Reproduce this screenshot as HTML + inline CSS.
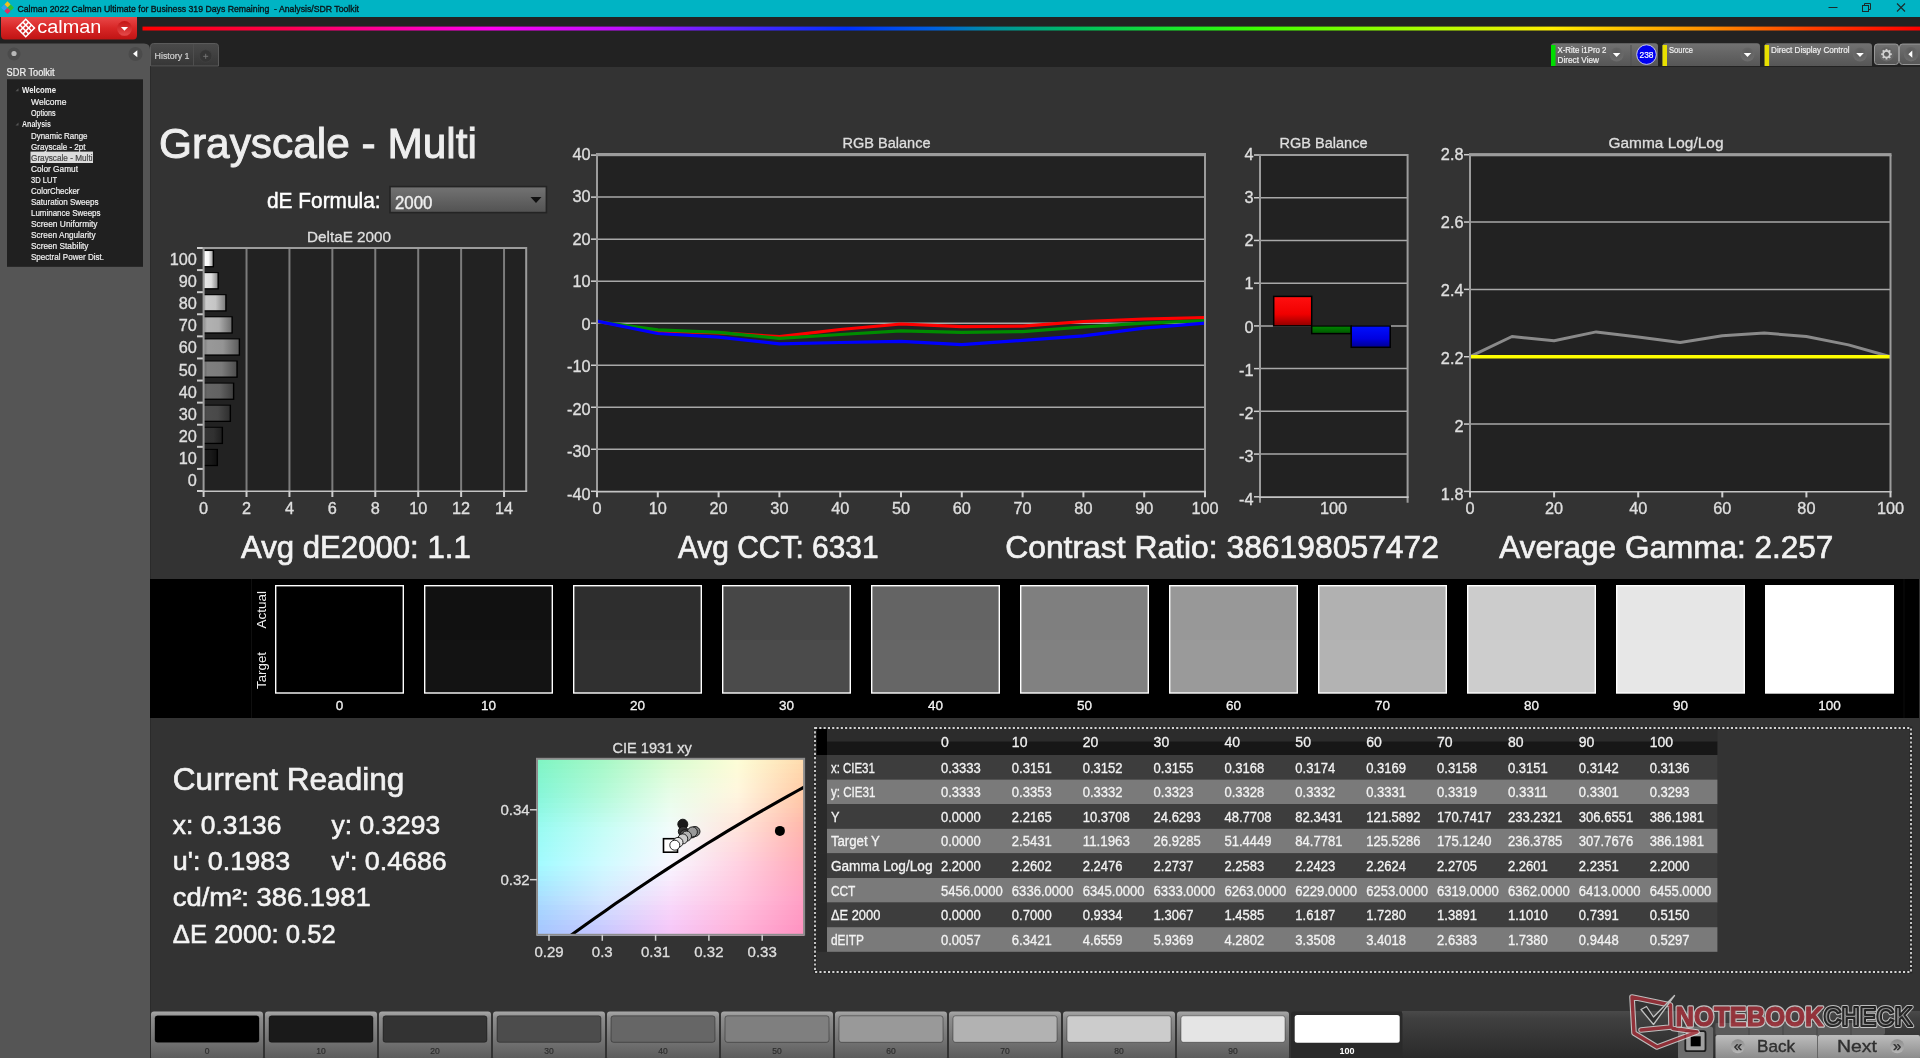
<!DOCTYPE html><html><head><meta charset="utf-8"><title>Calman Grayscale - Multi</title><style>html,body{margin:0;padding:0;background:#333;overflow:hidden;width:1920px;height:1058px;}svg{display:block;will-change:transform;font-family:"Liberation Sans",sans-serif;}</style></head><body><svg width="1920" height="1058" viewBox="0 0 1920 1058" font-family='"Liberation Sans", sans-serif'><defs><linearGradient id="gRed" x1="0" y1="0" x2="0" y2="1"><stop offset="0" stop-color="#e84848"/><stop offset="0.5" stop-color="#d82626"/><stop offset="1" stop-color="#c01414"/></linearGradient><linearGradient id="gDrp" x1="0" y1="0" x2="0" y2="1"><stop offset="0" stop-color="#c41414"/><stop offset="1" stop-color="#e44a4a"/></linearGradient><linearGradient id="gRain" x1="0" y1="0" x2="1" y2="0"><stop offset="0" stop-color="#ff0000"/><stop offset="0.081" stop-color="#ff0050"/><stop offset="0.138" stop-color="#ff00a0"/><stop offset="0.196" stop-color="#ff00f0"/><stop offset="0.269" stop-color="#c010ff"/><stop offset="0.314" stop-color="#7020ff"/><stop offset="0.396" stop-color="#0030ff"/><stop offset="0.445" stop-color="#0060e0"/><stop offset="0.478" stop-color="#0090a0"/><stop offset="0.527" stop-color="#00c060"/><stop offset="0.593" stop-color="#20f020"/><stop offset="0.629" stop-color="#40ff00"/><stop offset="0.726" stop-color="#b0ff00"/><stop offset="0.793" stop-color="#ffee00"/><stop offset="0.88" stop-color="#ff9000"/><stop offset="0.938" stop-color="#ff4000"/><stop offset="1" stop-color="#ff0000"/></linearGradient><linearGradient id="gTab" x1="0" y1="0" x2="0" y2="1"><stop offset="0" stop-color="#4a4a4a"/><stop offset="1" stop-color="#363636"/></linearGradient><linearGradient id="gTool" x1="0" y1="0" x2="0" y2="1"><stop offset="0" stop-color="#727272"/><stop offset="0.5" stop-color="#636363"/><stop offset="1" stop-color="#565656"/></linearGradient><radialGradient id="gDrop" cx="0.5" cy="0.35" r="0.6"><stop offset="0" stop-color="#5a5a5a"/><stop offset="1" stop-color="#6c6c6c"/></radialGradient><linearGradient id="gDD" x1="0" y1="0" x2="0" y2="1"><stop offset="0" stop-color="#737373"/><stop offset="1" stop-color="#525252"/></linearGradient><linearGradient id="gBar100" x1="0" y1="0" x2="1" y2="0"><stop offset="0" stop-color="rgb(204,204,204)"/><stop offset="0.12" stop-color="rgb(255,255,255)"/><stop offset="0.55" stop-color="rgb(247,247,247)"/><stop offset="1" stop-color="rgb(158,158,158)"/></linearGradient><linearGradient id="gBar90" x1="0" y1="0" x2="1" y2="0"><stop offset="0" stop-color="rgb(183,183,183)"/><stop offset="0.12" stop-color="rgb(229,229,229)"/><stop offset="0.55" stop-color="rgb(222,222,222)"/><stop offset="1" stop-color="rgb(141,141,141)"/></linearGradient><linearGradient id="gBar80" x1="0" y1="0" x2="1" y2="0"><stop offset="0" stop-color="rgb(163,163,163)"/><stop offset="0.12" stop-color="rgb(204,204,204)"/><stop offset="0.55" stop-color="rgb(197,197,197)"/><stop offset="1" stop-color="rgb(126,126,126)"/></linearGradient><linearGradient id="gBar70" x1="0" y1="0" x2="1" y2="0"><stop offset="0" stop-color="rgb(142,142,142)"/><stop offset="0.12" stop-color="rgb(178,178,178)"/><stop offset="0.55" stop-color="rgb(172,172,172)"/><stop offset="1" stop-color="rgb(110,110,110)"/></linearGradient><linearGradient id="gBar60" x1="0" y1="0" x2="1" y2="0"><stop offset="0" stop-color="rgb(122,122,122)"/><stop offset="0.12" stop-color="rgb(153,153,153)"/><stop offset="0.55" stop-color="rgb(148,148,148)"/><stop offset="1" stop-color="rgb(94,94,94)"/></linearGradient><linearGradient id="gBar50" x1="0" y1="0" x2="1" y2="0"><stop offset="0" stop-color="rgb(101,101,101)"/><stop offset="0.12" stop-color="rgb(127,127,127)"/><stop offset="0.55" stop-color="rgb(123,123,123)"/><stop offset="1" stop-color="rgb(78,78,78)"/></linearGradient><linearGradient id="gBar40" x1="0" y1="0" x2="1" y2="0"><stop offset="0" stop-color="rgb(81,81,81)"/><stop offset="0.12" stop-color="rgb(102,102,102)"/><stop offset="0.55" stop-color="rgb(98,98,98)"/><stop offset="1" stop-color="rgb(63,63,63)"/></linearGradient><linearGradient id="gBar30" x1="0" y1="0" x2="1" y2="0"><stop offset="0" stop-color="rgb(60,60,60)"/><stop offset="0.12" stop-color="rgb(76,76,76)"/><stop offset="0.55" stop-color="rgb(73,73,73)"/><stop offset="1" stop-color="rgb(47,47,47)"/></linearGradient><linearGradient id="gBar20" x1="0" y1="0" x2="1" y2="0"><stop offset="0" stop-color="rgb(40,40,40)"/><stop offset="0.12" stop-color="rgb(51,51,51)"/><stop offset="0.55" stop-color="rgb(49,49,49)"/><stop offset="1" stop-color="rgb(31,31,31)"/></linearGradient><linearGradient id="gBar10" x1="0" y1="0" x2="1" y2="0"><stop offset="0" stop-color="rgb(20,20,20)"/><stop offset="0.12" stop-color="rgb(26,26,26)"/><stop offset="0.55" stop-color="rgb(25,25,25)"/><stop offset="1" stop-color="rgb(16,16,16)"/></linearGradient><linearGradient id="gR" x1="0" y1="0" x2="0" y2="1"><stop offset="0" stop-color="#ff1010"/><stop offset="0.6" stop-color="#f00000"/><stop offset="1" stop-color="#900000"/></linearGradient><linearGradient id="gG" x1="0" y1="0" x2="0" y2="1"><stop offset="0" stop-color="#008800"/><stop offset="1" stop-color="#005500"/></linearGradient><linearGradient id="gB" x1="0" y1="0" x2="0" y2="1"><stop offset="0" stop-color="#0010ff"/><stop offset="0.6" stop-color="#0000e0"/><stop offset="1" stop-color="#000090"/></linearGradient><linearGradient id="gC0" x1="0" y1="0" x2="1" y2="0"><stop offset="0.0" stop-color="rgb(127,245,196)"/><stop offset="0.25" stop-color="rgb(167,248,199)"/><stop offset="0.5" stop-color="rgb(217,252,209)"/><stop offset="0.75" stop-color="rgb(253,253,215)"/><stop offset="1.0" stop-color="rgb(255,219,173)"/></linearGradient><linearGradient id="gC1" x1="0" y1="0" x2="1" y2="0"><stop offset="0.0" stop-color="rgb(128,245,199)"/><stop offset="0.25" stop-color="rgb(169,248,202)"/><stop offset="0.5" stop-color="rgb(219,252,212)"/><stop offset="0.75" stop-color="rgb(253,252,216)"/><stop offset="1.0" stop-color="rgb(255,216,172)"/></linearGradient><linearGradient id="gC2" x1="0" y1="0" x2="1" y2="0"><stop offset="0.0" stop-color="rgb(129,245,202)"/><stop offset="0.25" stop-color="rgb(171,249,205)"/><stop offset="0.5" stop-color="rgb(222,252,216)"/><stop offset="0.75" stop-color="rgb(254,251,217)"/><stop offset="1.0" stop-color="rgb(255,214,171)"/></linearGradient><linearGradient id="gC3" x1="0" y1="0" x2="1" y2="0"><stop offset="0.0" stop-color="rgb(130,245,205)"/><stop offset="0.25" stop-color="rgb(173,249,207)"/><stop offset="0.5" stop-color="rgb(224,252,219)"/><stop offset="0.75" stop-color="rgb(254,250,218)"/><stop offset="1.0" stop-color="rgb(255,211,170)"/></linearGradient><linearGradient id="gC4" x1="0" y1="0" x2="1" y2="0"><stop offset="0.0" stop-color="rgb(131,246,208)"/><stop offset="0.25" stop-color="rgb(175,249,210)"/><stop offset="0.5" stop-color="rgb(226,253,223)"/><stop offset="0.75" stop-color="rgb(254,249,220)"/><stop offset="1.0" stop-color="rgb(255,209,169)"/></linearGradient><linearGradient id="gC5" x1="0" y1="0" x2="1" y2="0"><stop offset="0.0" stop-color="rgb(132,246,211)"/><stop offset="0.25" stop-color="rgb(177,250,213)"/><stop offset="0.5" stop-color="rgb(228,253,226)"/><stop offset="0.75" stop-color="rgb(255,248,221)"/><stop offset="1.0" stop-color="rgb(255,206,168)"/></linearGradient><linearGradient id="gC6" x1="0" y1="0" x2="1" y2="0"><stop offset="0.0" stop-color="rgb(133,246,214)"/><stop offset="0.25" stop-color="rgb(179,250,215)"/><stop offset="0.5" stop-color="rgb(230,253,230)"/><stop offset="0.75" stop-color="rgb(255,247,222)"/><stop offset="1.0" stop-color="rgb(255,204,167)"/></linearGradient><linearGradient id="gC7" x1="0" y1="0" x2="1" y2="0"><stop offset="0.0" stop-color="rgb(135,246,217)"/><stop offset="0.25" stop-color="rgb(181,250,218)"/><stop offset="0.5" stop-color="rgb(232,253,233)"/><stop offset="0.75" stop-color="rgb(255,245,223)"/><stop offset="1.0" stop-color="rgb(255,201,166)"/></linearGradient><linearGradient id="gC8" x1="0" y1="0" x2="1" y2="0"><stop offset="0.0" stop-color="rgb(137,247,221)"/><stop offset="0.25" stop-color="rgb(183,251,222)"/><stop offset="0.5" stop-color="rgb(234,253,235)"/><stop offset="0.75" stop-color="rgb(255,243,222)"/><stop offset="1.0" stop-color="rgb(255,198,167)"/></linearGradient><linearGradient id="gC9" x1="0" y1="0" x2="1" y2="0"><stop offset="0.0" stop-color="rgb(140,248,224)"/><stop offset="0.25" stop-color="rgb(186,251,226)"/><stop offset="0.5" stop-color="rgb(235,253,238)"/><stop offset="0.75" stop-color="rgb(255,240,222)"/><stop offset="1.0" stop-color="rgb(255,196,168)"/></linearGradient><linearGradient id="gC10" x1="0" y1="0" x2="1" y2="0"><stop offset="0.0" stop-color="rgb(142,248,228)"/><stop offset="0.25" stop-color="rgb(188,251,230)"/><stop offset="0.5" stop-color="rgb(237,253,241)"/><stop offset="0.75" stop-color="rgb(255,238,222)"/><stop offset="1.0" stop-color="rgb(255,193,169)"/></linearGradient><linearGradient id="gC11" x1="0" y1="0" x2="1" y2="0"><stop offset="0.0" stop-color="rgb(145,249,232)"/><stop offset="0.25" stop-color="rgb(191,252,234)"/><stop offset="0.5" stop-color="rgb(238,252,243)"/><stop offset="0.75" stop-color="rgb(255,235,221)"/><stop offset="1.0" stop-color="rgb(255,190,170)"/></linearGradient><linearGradient id="gC12" x1="0" y1="0" x2="1" y2="0"><stop offset="0.0" stop-color="rgb(147,250,235)"/><stop offset="0.25" stop-color="rgb(193,252,238)"/><stop offset="0.5" stop-color="rgb(239,252,246)"/><stop offset="0.75" stop-color="rgb(255,233,221)"/><stop offset="1.0" stop-color="rgb(255,187,170)"/></linearGradient><linearGradient id="gC13" x1="0" y1="0" x2="1" y2="0"><stop offset="0.0" stop-color="rgb(150,250,239)"/><stop offset="0.25" stop-color="rgb(196,253,242)"/><stop offset="0.5" stop-color="rgb(241,252,249)"/><stop offset="0.75" stop-color="rgb(255,230,220)"/><stop offset="1.0" stop-color="rgb(255,184,171)"/></linearGradient><linearGradient id="gC14" x1="0" y1="0" x2="1" y2="0"><stop offset="0.0" stop-color="rgb(152,251,242)"/><stop offset="0.25" stop-color="rgb(198,253,246)"/><stop offset="0.5" stop-color="rgb(242,252,251)"/><stop offset="0.75" stop-color="rgb(255,228,220)"/><stop offset="1.0" stop-color="rgb(255,182,172)"/></linearGradient><linearGradient id="gC15" x1="0" y1="0" x2="1" y2="0"><stop offset="0.0" stop-color="rgb(154,251,244)"/><stop offset="0.25" stop-color="rgb(199,253,247)"/><stop offset="0.5" stop-color="rgb(243,251,252)"/><stop offset="0.75" stop-color="rgb(255,225,221)"/><stop offset="1.0" stop-color="rgb(255,180,174)"/></linearGradient><linearGradient id="gC16" x1="0" y1="0" x2="1" y2="0"><stop offset="0.0" stop-color="rgb(155,251,246)"/><stop offset="0.25" stop-color="rgb(201,252,249)"/><stop offset="0.5" stop-color="rgb(244,250,252)"/><stop offset="0.75" stop-color="rgb(255,223,222)"/><stop offset="1.0" stop-color="rgb(255,178,176)"/></linearGradient><linearGradient id="gC17" x1="0" y1="0" x2="1" y2="0"><stop offset="0.0" stop-color="rgb(156,251,248)"/><stop offset="0.25" stop-color="rgb(202,252,250)"/><stop offset="0.5" stop-color="rgb(245,249,253)"/><stop offset="0.75" stop-color="rgb(255,220,223)"/><stop offset="1.0" stop-color="rgb(255,177,177)"/></linearGradient><linearGradient id="gC18" x1="0" y1="0" x2="1" y2="0"><stop offset="0.0" stop-color="rgb(158,251,249)"/><stop offset="0.25" stop-color="rgb(203,252,251)"/><stop offset="0.5" stop-color="rgb(245,249,253)"/><stop offset="0.75" stop-color="rgb(255,218,223)"/><stop offset="1.0" stop-color="rgb(255,175,179)"/></linearGradient><linearGradient id="gC19" x1="0" y1="0" x2="1" y2="0"><stop offset="0.0" stop-color="rgb(159,251,251)"/><stop offset="0.25" stop-color="rgb(204,252,252)"/><stop offset="0.5" stop-color="rgb(246,248,254)"/><stop offset="0.75" stop-color="rgb(255,215,224)"/><stop offset="1.0" stop-color="rgb(255,174,180)"/></linearGradient><linearGradient id="gC20" x1="0" y1="0" x2="1" y2="0"><stop offset="0.0" stop-color="rgb(160,251,253)"/><stop offset="0.25" stop-color="rgb(206,251,254)"/><stop offset="0.5" stop-color="rgb(247,247,254)"/><stop offset="0.75" stop-color="rgb(255,213,225)"/><stop offset="1.0" stop-color="rgb(255,172,182)"/></linearGradient><linearGradient id="gC21" x1="0" y1="0" x2="1" y2="0"><stop offset="0.0" stop-color="rgb(162,251,255)"/><stop offset="0.25" stop-color="rgb(207,251,255)"/><stop offset="0.5" stop-color="rgb(248,246,255)"/><stop offset="0.75" stop-color="rgb(255,210,226)"/><stop offset="1.0" stop-color="rgb(255,170,184)"/></linearGradient><linearGradient id="gC22" x1="0" y1="0" x2="1" y2="0"><stop offset="0.0" stop-color="rgb(163,247,255)"/><stop offset="0.25" stop-color="rgb(208,248,255)"/><stop offset="0.5" stop-color="rgb(248,243,254)"/><stop offset="0.75" stop-color="rgb(255,208,226)"/><stop offset="1.0" stop-color="rgb(255,169,186)"/></linearGradient><linearGradient id="gC23" x1="0" y1="0" x2="1" y2="0"><stop offset="0.0" stop-color="rgb(164,243,255)"/><stop offset="0.25" stop-color="rgb(208,245,255)"/><stop offset="0.5" stop-color="rgb(248,239,254)"/><stop offset="0.75" stop-color="rgb(255,206,225)"/><stop offset="1.0" stop-color="rgb(255,167,187)"/></linearGradient><linearGradient id="gC24" x1="0" y1="0" x2="1" y2="0"><stop offset="0.0" stop-color="rgb(164,239,255)"/><stop offset="0.25" stop-color="rgb(209,243,255)"/><stop offset="0.5" stop-color="rgb(248,236,253)"/><stop offset="0.75" stop-color="rgb(255,204,225)"/><stop offset="1.0" stop-color="rgb(255,166,189)"/></linearGradient><linearGradient id="gC25" x1="0" y1="0" x2="1" y2="0"><stop offset="0.0" stop-color="rgb(165,234,255)"/><stop offset="0.25" stop-color="rgb(210,240,255)"/><stop offset="0.5" stop-color="rgb(248,232,252)"/><stop offset="0.75" stop-color="rgb(255,202,225)"/><stop offset="1.0" stop-color="rgb(255,165,190)"/></linearGradient><linearGradient id="gC26" x1="0" y1="0" x2="1" y2="0"><stop offset="0.0" stop-color="rgb(166,230,255)"/><stop offset="0.25" stop-color="rgb(210,237,255)"/><stop offset="0.5" stop-color="rgb(248,228,252)"/><stop offset="0.75" stop-color="rgb(255,200,225)"/><stop offset="1.0" stop-color="rgb(255,163,192)"/></linearGradient><linearGradient id="gC27" x1="0" y1="0" x2="1" y2="0"><stop offset="0.0" stop-color="rgb(167,226,255)"/><stop offset="0.25" stop-color="rgb(211,234,255)"/><stop offset="0.5" stop-color="rgb(248,225,251)"/><stop offset="0.75" stop-color="rgb(255,199,224)"/><stop offset="1.0" stop-color="rgb(255,162,194)"/></linearGradient><linearGradient id="gC28" x1="0" y1="0" x2="1" y2="0"><stop offset="0.0" stop-color="rgb(168,221,255)"/><stop offset="0.25" stop-color="rgb(212,231,255)"/><stop offset="0.5" stop-color="rgb(248,221,250)"/><stop offset="0.75" stop-color="rgb(255,197,224)"/><stop offset="1.0" stop-color="rgb(255,160,196)"/></linearGradient><linearGradient id="gC29" x1="0" y1="0" x2="1" y2="0"><stop offset="0.0" stop-color="rgb(168,218,255)"/><stop offset="0.25" stop-color="rgb(211,227,255)"/><stop offset="0.5" stop-color="rgb(248,218,250)"/><stop offset="0.75" stop-color="rgb(255,194,223)"/><stop offset="1.0" stop-color="rgb(255,158,196)"/></linearGradient><linearGradient id="gC30" x1="0" y1="0" x2="1" y2="0"><stop offset="0.0" stop-color="rgb(167,214,255)"/><stop offset="0.25" stop-color="rgb(209,222,255)"/><stop offset="0.5" stop-color="rgb(248,214,250)"/><stop offset="0.75" stop-color="rgb(255,191,222)"/><stop offset="1.0" stop-color="rgb(255,156,195)"/></linearGradient><linearGradient id="gC31" x1="0" y1="0" x2="1" y2="0"><stop offset="0.0" stop-color="rgb(166,211,255)"/><stop offset="0.25" stop-color="rgb(208,217,255)"/><stop offset="0.5" stop-color="rgb(247,211,249)"/><stop offset="0.75" stop-color="rgb(255,188,221)"/><stop offset="1.0" stop-color="rgb(255,154,194)"/></linearGradient><linearGradient id="gC32" x1="0" y1="0" x2="1" y2="0"><stop offset="0.0" stop-color="rgb(166,208,255)"/><stop offset="0.25" stop-color="rgb(206,213,255)"/><stop offset="0.5" stop-color="rgb(247,208,249)"/><stop offset="0.75" stop-color="rgb(255,186,220)"/><stop offset="1.0" stop-color="rgb(255,152,194)"/></linearGradient><linearGradient id="gC33" x1="0" y1="0" x2="1" y2="0"><stop offset="0.0" stop-color="rgb(165,204,255)"/><stop offset="0.25" stop-color="rgb(204,208,255)"/><stop offset="0.5" stop-color="rgb(247,204,249)"/><stop offset="0.75" stop-color="rgb(255,183,219)"/><stop offset="1.0" stop-color="rgb(255,150,193)"/></linearGradient><linearGradient id="gC34" x1="0" y1="0" x2="1" y2="0"><stop offset="0.0" stop-color="rgb(165,201,255)"/><stop offset="0.25" stop-color="rgb(202,203,255)"/><stop offset="0.5" stop-color="rgb(246,201,248)"/><stop offset="0.75" stop-color="rgb(255,180,218)"/><stop offset="1.0" stop-color="rgb(255,147,193)"/></linearGradient><linearGradient id="gC35" x1="0" y1="0" x2="1" y2="0"><stop offset="0.0" stop-color="rgb(164,198,255)"/><stop offset="0.25" stop-color="rgb(201,198,255)"/><stop offset="0.5" stop-color="rgb(246,198,248)"/><stop offset="0.75" stop-color="rgb(255,177,217)"/><stop offset="1.0" stop-color="rgb(255,145,192)"/></linearGradient><linearGradient id="gBtn" x1="0" y1="0" x2="0" y2="1"><stop offset="0" stop-color="#a8a8a8"/><stop offset="0.12" stop-color="#8e8e8e"/><stop offset="0.6" stop-color="#747474"/><stop offset="1" stop-color="#5a5a5a"/></linearGradient><linearGradient id="gPanel" x1="0" y1="0" x2="0" y2="1"><stop offset="0" stop-color="#4a4a4a"/><stop offset="0.15" stop-color="#404040"/><stop offset="1" stop-color="#2a2a2a"/></linearGradient><linearGradient id="gBN" x1="0" y1="0" x2="0" y2="1"><stop offset="0" stop-color="#bdbdbd"/><stop offset="1" stop-color="#8a8a8a"/></linearGradient><linearGradient id="gCirc" x1="0" y1="0" x2="0" y2="1"><stop offset="0" stop-color="#8c8c8c"/><stop offset="1" stop-color="#b8b8b8"/></linearGradient></defs><rect x="0" y="0" width="1920" height="1058" fill="#333333" />
<rect x="0" y="17" width="1920" height="50" fill="#222222" />
<rect x="0" y="0" width="1920" height="17" fill="#00b4c4" />
<rect x="5.3" y="2.2" width="4.4" height="4.4" fill="#f0c020" transform="rotate(45 7.5 4.4)"/>
<rect x="2.0" y="5.5" width="4.4" height="4.4" fill="#30a0f0" transform="rotate(45 4.2 7.7)"/>
<rect x="8.600000000000001" y="5.5" width="4.4" height="4.4" fill="#30c030" transform="rotate(45 10.8 7.7)"/>
<rect x="5.3" y="8.8" width="4.4" height="4.4" fill="#e03060" transform="rotate(45 7.5 11.0)"/>
<text x="17.4" y="12" font-size="8.9" fill="#08161a" stroke="#08161a" stroke-width="0.35" textLength="341.6" lengthAdjust="spacingAndGlyphs" xml:space="preserve">Calman 2022 Calman Ultimate for Business 319 Days Remaining  - Analysis/SDR Toolkit</text>
<line x1="1828.5" y1="7.5" x2="1837.5" y2="7.5" stroke="#1a2a2a" stroke-width="1" />
<rect x="1862.5" y="5.5" width="6" height="6" fill="none" stroke="#1a2a2a" stroke-width="1"/>
<path d="M1864.5 5.5 V3.5 H1870.5 V9.5 H1868.5" fill="none" stroke="#1a2a2a" stroke-width="1"/>
<path d="M1897 3.5 L1905 11.5 M1905 3.5 L1897 11.5" stroke="#1a2a2a" stroke-width="1.1"/>
<path d="M1 17 H137 V35 Q137 39.5 133 39.5 H5 Q1 39.5 1 35 Z" fill="url(#gRed)"/>
<g transform="translate(25.75 28) rotate(45)" fill="none" stroke="#fff" stroke-width="1.5"><rect x="-6.2" y="-6.2" width="12.4" height="12.4"/><line x1="-2.07" y1="-6.2" x2="-2.07" y2="6.2"/><line x1="2.07" y1="-6.2" x2="2.07" y2="6.2"/><line x1="-6.2" y1="-2.07" x2="6.2" y2="-2.07"/><line x1="-6.2" y1="2.07" x2="6.2" y2="2.07"/></g>
<text x="37.3" y="32.9" font-size="18" fill="#ffffff" textLength="64" lengthAdjust="spacingAndGlyphs">calman</text>
<circle cx="124.5" cy="28.4" r="7.4" fill="url(#gDrp)"/>
<path d="M120.9 27 H128.1 L124.5 30.8 Z" fill="#fff"/>
<rect x="142.5" y="26.6" width="1777.5" height="3.9" fill="url(#gRain)" />
<path d="M0 43.5 H144 Q150 43.5 150 49.5 V1058 H0 Z" fill="#555555"/>
<circle cx="14" cy="54" r="6.5" fill="#4b4b4b"/><circle cx="14" cy="53.5" r="2.6" fill="#b8b8b8"/>
<circle cx="135.5" cy="54" r="7" fill="#4b4b4b"/><path d="M137.3 50.3 V57.3 L133 53.8 Z" fill="#fff"/>
<text x="6.6" y="75.9" font-size="10" fill="#f0f0f0" text-anchor="start" font-weight="normal" stroke="#f0f0f0" stroke-width="0.22" textLength="48" lengthAdjust="spacingAndGlyphs" >SDR Toolkit</text>
<rect x="7" y="79.3" width="136" height="187.5" fill="#202020" />
<text x="22" y="93.1" font-size="9.2" fill="#f2f2f2" text-anchor="start" font-weight="bold" textLength="34" lengthAdjust="spacingAndGlyphs" >Welcome</text>
<path d="M15.5 91.3 L18.5 88.3 L18.5 91.3 Z" fill="#555"/>
<text x="31" y="105.3" font-size="9.2" fill="#f2f2f2" text-anchor="start" font-weight="normal" stroke="#f2f2f2" stroke-width="0.20" textLength="35.5" lengthAdjust="spacingAndGlyphs" >Welcome</text>
<text x="31" y="116.1" font-size="9.2" fill="#f2f2f2" text-anchor="start" font-weight="normal" stroke="#f2f2f2" stroke-width="0.20" textLength="24.5" lengthAdjust="spacingAndGlyphs" >Options</text>
<text x="22" y="127.3" font-size="9.2" fill="#f2f2f2" text-anchor="start" font-weight="bold" textLength="29" lengthAdjust="spacingAndGlyphs" >Analysis</text>
<path d="M15.5 125.5 L18.5 122.5 L18.5 125.5 Z" fill="#555"/>
<text x="31" y="139" font-size="9.2" fill="#f2f2f2" text-anchor="start" font-weight="normal" stroke="#f2f2f2" stroke-width="0.20" textLength="56.5" lengthAdjust="spacingAndGlyphs" >Dynamic Range</text>
<text x="31" y="149.7" font-size="9.2" fill="#f2f2f2" text-anchor="start" font-weight="normal" stroke="#f2f2f2" stroke-width="0.20" textLength="54.5" lengthAdjust="spacingAndGlyphs" >Grayscale - 2pt</text>
<rect x="30.5" y="151.6" width="62.5" height="11.4" fill="#dcdcdc" />
<text x="31" y="160.7" font-size="9.2" fill="#444" text-anchor="start" font-weight="normal" stroke="#444" stroke-width="0.20" textLength="61.5" lengthAdjust="spacingAndGlyphs" >Grayscale - Multi</text>
<text x="31" y="172.2" font-size="9.2" fill="#f2f2f2" text-anchor="start" font-weight="normal" stroke="#f2f2f2" stroke-width="0.20" textLength="47" lengthAdjust="spacingAndGlyphs" >Color Gamut</text>
<text x="31" y="182.6" font-size="9.2" fill="#f2f2f2" text-anchor="start" font-weight="normal" stroke="#f2f2f2" stroke-width="0.20" textLength="26" lengthAdjust="spacingAndGlyphs" >3D LUT</text>
<text x="31" y="193.9" font-size="9.2" fill="#f2f2f2" text-anchor="start" font-weight="normal" stroke="#f2f2f2" stroke-width="0.20" textLength="48.5" lengthAdjust="spacingAndGlyphs" >ColorChecker</text>
<text x="31" y="204.8" font-size="9.2" fill="#f2f2f2" text-anchor="start" font-weight="normal" stroke="#f2f2f2" stroke-width="0.20" textLength="67.5" lengthAdjust="spacingAndGlyphs" >Saturation Sweeps</text>
<text x="31" y="215.5" font-size="9.2" fill="#f2f2f2" text-anchor="start" font-weight="normal" stroke="#f2f2f2" stroke-width="0.20" textLength="69.5" lengthAdjust="spacingAndGlyphs" >Luminance Sweeps</text>
<text x="31" y="227" font-size="9.2" fill="#f2f2f2" text-anchor="start" font-weight="normal" stroke="#f2f2f2" stroke-width="0.20" textLength="66.5" lengthAdjust="spacingAndGlyphs" >Screen Uniformity</text>
<text x="31" y="238" font-size="9.2" fill="#f2f2f2" text-anchor="start" font-weight="normal" stroke="#f2f2f2" stroke-width="0.20" textLength="64.5" lengthAdjust="spacingAndGlyphs" >Screen Angularity</text>
<text x="31" y="248.7" font-size="9.2" fill="#f2f2f2" text-anchor="start" font-weight="normal" stroke="#f2f2f2" stroke-width="0.20" textLength="57.5" lengthAdjust="spacingAndGlyphs" >Screen Stability</text>
<text x="31" y="259.7" font-size="9.2" fill="#f2f2f2" text-anchor="start" font-weight="normal" stroke="#f2f2f2" stroke-width="0.20" textLength="73" lengthAdjust="spacingAndGlyphs" >Spectral Power Dist.</text>
<line x1="150.5" y1="67" x2="150.5" y2="1058" stroke="#2b2b2b" stroke-width="1" />
<path d="M150.5 66 V46.5 Q150.5 43.5 153.5 43.5 H215.5 Q218.5 43.5 218.5 46.5 V66 Z" fill="url(#gTab)" stroke="#5a5a5a" stroke-width="1"/>
<line x1="193.5" y1="44" x2="193.5" y2="66" stroke="#4e4e4e" stroke-width="1" />
<text x="154.5" y="59" font-size="9.6" fill="#d0d0d0" text-anchor="start" font-weight="normal" stroke="#d0d0d0" stroke-width="0.21" textLength="35" lengthAdjust="spacingAndGlyphs" >History 1</text>
<circle cx="205.7" cy="56" r="6.2" fill="#353535" stroke="#444" stroke-width="0.6"/>
<path d="M203.2 56.3 H208.2 M205.7 53.8 V58.8" stroke="#777" stroke-width="0.9"/>
<path d="M1551 66 V46.3 Q1551 43.3 1554 43.3 H1655 Q1658 43.3 1658 46.3 V66 Z" fill="url(#gTool)"/>
<rect x="1551" y="45" width="4.5" height="21" fill="#00dd00" />
<text x="1557.5" y="52.8" font-size="9" fill="#f0f0f0" text-anchor="start" font-weight="normal" stroke="#f0f0f0" stroke-width="0.20" textLength="49" lengthAdjust="spacingAndGlyphs" >X-Rite i1Pro 2</text>
<text x="1557.5" y="62.6" font-size="9" fill="#f0f0f0" text-anchor="start" font-weight="normal" stroke="#f0f0f0" stroke-width="0.20" textLength="41.5" lengthAdjust="spacingAndGlyphs" >Direct View</text>
<circle cx="1616.6" cy="54.6" r="7" fill="url(#gDrop)"/>
<path d="M1612.8 53 H1620.3999999999999 L1616.6 57 Z" fill="#fff"/>
<line x1="1631" y1="45" x2="1631" y2="66" stroke="#505050" stroke-width="1" />
<circle cx="1646.5" cy="54.6" r="9.8" fill="#0000f0" stroke="#e8e8ff" stroke-width="0.8"/>
<text x="1646.5" y="57.8" font-size="9" fill="#ffffff" text-anchor="middle" font-weight="normal" stroke="#ffffff" stroke-width="0.20" textLength="14" lengthAdjust="spacingAndGlyphs" >238</text>
<path d="M1662.5 66 V46.3 Q1662.5 43.3 1665.5 43.3 H1757 Q1760 43.3 1760 46.3 V66 Z" fill="url(#gTool)"/>
<rect x="1662.5" y="45" width="4.5" height="21" fill="#e8e000" />
<text x="1669" y="52.8" font-size="9" fill="#f0f0f0" text-anchor="start" font-weight="normal" stroke="#f0f0f0" stroke-width="0.20" textLength="24" lengthAdjust="spacingAndGlyphs" >Source</text>
<circle cx="1747.5" cy="54.6" r="7" fill="url(#gDrop)"/>
<path d="M1743.7 53 H1751.3 L1747.5 57 Z" fill="#fff"/>
<path d="M1764.6 66 V46.3 Q1764.6 43.3 1767.6 43.3 H1869 Q1872 43.3 1872 46.3 V66 Z" fill="url(#gTool)"/>
<rect x="1764.6" y="45" width="4.5" height="21" fill="#e8e000" />
<text x="1771.1" y="52.8" font-size="9" fill="#f0f0f0" text-anchor="start" font-weight="normal" stroke="#f0f0f0" stroke-width="0.20" textLength="78.5" lengthAdjust="spacingAndGlyphs" >Direct Display Control</text>
<circle cx="1860" cy="54.6" r="7" fill="url(#gDrop)"/>
<path d="M1856.2 53 H1863.8 L1860 57 Z" fill="#fff"/>
<rect x="1874.5" y="44" width="24" height="20.5" rx="3" fill="url(#gTool)" stroke="#a0a0a0" stroke-width="0.9"/>
<circle cx="1886.5" cy="54.2" r="7.2" fill="url(#gDrop)"/>
<rect x="1885.60" y="48.90" width="1.8" height="2.6" fill="#d0d0d0" transform="rotate(0 1886.5 54.2)"/><rect x="1885.60" y="48.90" width="1.8" height="2.6" fill="#d0d0d0" transform="rotate(45 1886.5 54.2)"/><rect x="1885.60" y="48.90" width="1.8" height="2.6" fill="#d0d0d0" transform="rotate(90 1886.5 54.2)"/><rect x="1885.60" y="48.90" width="1.8" height="2.6" fill="#d0d0d0" transform="rotate(135 1886.5 54.2)"/><rect x="1885.60" y="48.90" width="1.8" height="2.6" fill="#d0d0d0" transform="rotate(180 1886.5 54.2)"/><rect x="1885.60" y="48.90" width="1.8" height="2.6" fill="#d0d0d0" transform="rotate(225 1886.5 54.2)"/><rect x="1885.60" y="48.90" width="1.8" height="2.6" fill="#d0d0d0" transform="rotate(270 1886.5 54.2)"/><rect x="1885.60" y="48.90" width="1.8" height="2.6" fill="#d0d0d0" transform="rotate(315 1886.5 54.2)"/>
<circle cx="1886.5" cy="54.2" r="3.3" fill="none" stroke="#d0d0d0" stroke-width="1.6"/>
<rect x="1899.5" y="44" width="24" height="20.5" rx="3" fill="url(#gTool)" stroke="#a0a0a0" stroke-width="0.9"/>
<circle cx="1911" cy="54.2" r="7.2" fill="url(#gDrop)"/><path d="M1912.3 50.6 V57.8 L1908.3 54.2 Z" fill="#fff"/>
<text x="159" y="158" font-size="43" fill="#eeeeee" text-anchor="start" font-weight="normal" stroke="#eeeeee" stroke-width="0.95" textLength="318" lengthAdjust="spacingAndGlyphs" >Grayscale - Multi</text>
<text x="380.6" y="207.8" font-size="21.5" fill="#ffffff" text-anchor="end" font-weight="normal" stroke="#ffffff" stroke-width="0.47" textLength="113.6" lengthAdjust="spacingAndGlyphs" >dE Formula:</text>
<rect x="390" y="186.6" width="156.4" height="26" fill="url(#gDD)" stroke="#242424" stroke-width="1.6"/>
<text x="395" y="209" font-size="17.5" fill="#f0f0f0" text-anchor="start" font-weight="normal" stroke="#f0f0f0" stroke-width="0.38" textLength="37.5" lengthAdjust="spacingAndGlyphs" >2000</text>
<path d="M530.5 197 H541.5 L536 203 Z" fill="#111"/>
<text x="349" y="242.4" font-size="15.5" fill="#dedede" text-anchor="middle" font-weight="normal" stroke="#dedede" stroke-width="0.34" textLength="84" lengthAdjust="spacingAndGlyphs" >DeltaE 2000</text>
<rect x="203.6" y="248" width="322.6" height="243" fill="#222222" />
<line x1="246.52" y1="248" x2="246.52" y2="491" stroke="#7c7c7c" stroke-width="2" />
<line x1="289.44" y1="248" x2="289.44" y2="491" stroke="#7c7c7c" stroke-width="2" />
<line x1="332.36" y1="248" x2="332.36" y2="491" stroke="#7c7c7c" stroke-width="2" />
<line x1="375.28" y1="248" x2="375.28" y2="491" stroke="#7c7c7c" stroke-width="2" />
<line x1="418.2" y1="248" x2="418.2" y2="491" stroke="#7c7c7c" stroke-width="2" />
<line x1="461.12" y1="248" x2="461.12" y2="491" stroke="#7c7c7c" stroke-width="2" />
<line x1="504.04" y1="248" x2="504.04" y2="491" stroke="#7c7c7c" stroke-width="2" />
<text x="196.8" y="265.05" font-size="16.3" fill="#dedede" text-anchor="end" font-weight="normal" stroke="#dedede" stroke-width="0.36" >100</text>
<line x1="197" y1="248" x2="203" y2="248" stroke="#cfcfcf" stroke-width="2" />
<rect x="203.6" y="250.05" width="10.45" height="17.3" fill="#000000" />
<rect x="203.6" y="251.05" width="9.05" height="15" fill="url(#gBar100)" />
<text x="196.8" y="287.14" font-size="16.3" fill="#dedede" text-anchor="end" font-weight="normal" stroke="#dedede" stroke-width="0.36" >90</text>
<line x1="197" y1="270.09" x2="203" y2="270.09" stroke="#cfcfcf" stroke-width="2" />
<rect x="203.6" y="272.14" width="15.26" height="17.3" fill="#000000" />
<rect x="203.6" y="273.14" width="13.86" height="15" fill="url(#gBar90)" />
<text x="196.8" y="309.23" font-size="16.3" fill="#dedede" text-anchor="end" font-weight="normal" stroke="#dedede" stroke-width="0.36" >80</text>
<line x1="197" y1="292.18" x2="203" y2="292.18" stroke="#cfcfcf" stroke-width="2" />
<rect x="203.6" y="294.23" width="23.03" height="17.3" fill="#000000" />
<rect x="203.6" y="295.23" width="21.63" height="15" fill="url(#gBar80)" />
<text x="196.8" y="331.32" font-size="16.3" fill="#dedede" text-anchor="end" font-weight="normal" stroke="#dedede" stroke-width="0.36" >70</text>
<line x1="197" y1="314.27" x2="203" y2="314.27" stroke="#cfcfcf" stroke-width="2" />
<rect x="203.6" y="316.32" width="29.21" height="17.3" fill="#000000" />
<rect x="203.6" y="317.32" width="27.81" height="15" fill="url(#gBar70)" />
<text x="196.8" y="353.41" font-size="16.3" fill="#dedede" text-anchor="end" font-weight="normal" stroke="#dedede" stroke-width="0.36" >60</text>
<line x1="197" y1="336.36" x2="203" y2="336.36" stroke="#cfcfcf" stroke-width="2" />
<rect x="203.6" y="338.41" width="36.48" height="17.3" fill="#000000" />
<rect x="203.6" y="339.41" width="35.08" height="15" fill="url(#gBar60)" />
<text x="196.8" y="375.5" font-size="16.3" fill="#dedede" text-anchor="end" font-weight="normal" stroke="#dedede" stroke-width="0.36" >50</text>
<line x1="197" y1="358.45" x2="203" y2="358.45" stroke="#cfcfcf" stroke-width="2" />
<rect x="203.6" y="360.5" width="34.14" height="17.3" fill="#000000" />
<rect x="203.6" y="361.5" width="32.74" height="15" fill="url(#gBar50)" />
<text x="196.8" y="397.59" font-size="16.3" fill="#dedede" text-anchor="end" font-weight="normal" stroke="#dedede" stroke-width="0.36" >40</text>
<line x1="197" y1="380.55" x2="203" y2="380.55" stroke="#cfcfcf" stroke-width="2" />
<rect x="203.6" y="382.59" width="30.7" height="17.3" fill="#000000" />
<rect x="203.6" y="383.59" width="29.3" height="15" fill="url(#gBar40)" />
<text x="196.8" y="419.68" font-size="16.3" fill="#dedede" text-anchor="end" font-weight="normal" stroke="#dedede" stroke-width="0.36" >30</text>
<line x1="197" y1="402.64" x2="203" y2="402.64" stroke="#cfcfcf" stroke-width="2" />
<rect x="203.6" y="404.68" width="27.44" height="17.3" fill="#000000" />
<rect x="203.6" y="405.68" width="26.04" height="15" fill="url(#gBar30)" />
<text x="196.8" y="441.77" font-size="16.3" fill="#dedede" text-anchor="end" font-weight="normal" stroke="#dedede" stroke-width="0.36" >20</text>
<line x1="197" y1="424.73" x2="203" y2="424.73" stroke="#cfcfcf" stroke-width="2" />
<rect x="203.6" y="426.77" width="19.43" height="17.3" fill="#000000" />
<rect x="203.6" y="427.77" width="18.03" height="15" fill="url(#gBar20)" />
<text x="196.8" y="463.86" font-size="16.3" fill="#dedede" text-anchor="end" font-weight="normal" stroke="#dedede" stroke-width="0.36" >10</text>
<line x1="197" y1="446.82" x2="203" y2="446.82" stroke="#cfcfcf" stroke-width="2" />
<rect x="203.6" y="448.86" width="14.42" height="17.3" fill="#000000" />
<rect x="203.6" y="449.86" width="13.02" height="15" fill="url(#gBar10)" />
<text x="196.8" y="485.95" font-size="16.3" fill="#dedede" text-anchor="end" font-weight="normal" stroke="#dedede" stroke-width="0.36" >0</text>
<line x1="197" y1="468.91" x2="203" y2="468.91" stroke="#cfcfcf" stroke-width="2" />
<line x1="197" y1="491" x2="203" y2="491" stroke="#cfcfcf" stroke-width="2" />
<path d="M203.6 491 V248 H526.2 V491" fill="none" stroke="#9c9c9c" stroke-width="2"/>
<line x1="202.6" y1="491.3" x2="527.2" y2="491.3" stroke="#c4c4c4" stroke-width="1.6" />
<line x1="203.6" y1="491" x2="203.6" y2="497" stroke="#cfcfcf" stroke-width="2" />
<text x="203.6" y="513.8" font-size="16.3" fill="#dedede" text-anchor="middle" font-weight="normal" stroke="#dedede" stroke-width="0.36" >0</text>
<line x1="246.52" y1="491" x2="246.52" y2="497" stroke="#cfcfcf" stroke-width="2" />
<text x="246.52" y="513.8" font-size="16.3" fill="#dedede" text-anchor="middle" font-weight="normal" stroke="#dedede" stroke-width="0.36" >2</text>
<line x1="289.44" y1="491" x2="289.44" y2="497" stroke="#cfcfcf" stroke-width="2" />
<text x="289.44" y="513.8" font-size="16.3" fill="#dedede" text-anchor="middle" font-weight="normal" stroke="#dedede" stroke-width="0.36" >4</text>
<line x1="332.36" y1="491" x2="332.36" y2="497" stroke="#cfcfcf" stroke-width="2" />
<text x="332.36" y="513.8" font-size="16.3" fill="#dedede" text-anchor="middle" font-weight="normal" stroke="#dedede" stroke-width="0.36" >6</text>
<line x1="375.28" y1="491" x2="375.28" y2="497" stroke="#cfcfcf" stroke-width="2" />
<text x="375.28" y="513.8" font-size="16.3" fill="#dedede" text-anchor="middle" font-weight="normal" stroke="#dedede" stroke-width="0.36" >8</text>
<line x1="418.2" y1="491" x2="418.2" y2="497" stroke="#cfcfcf" stroke-width="2" />
<text x="418.2" y="513.8" font-size="16.3" fill="#dedede" text-anchor="middle" font-weight="normal" stroke="#dedede" stroke-width="0.36" >10</text>
<line x1="461.12" y1="491" x2="461.12" y2="497" stroke="#cfcfcf" stroke-width="2" />
<text x="461.12" y="513.8" font-size="16.3" fill="#dedede" text-anchor="middle" font-weight="normal" stroke="#dedede" stroke-width="0.36" >12</text>
<line x1="504.04" y1="491" x2="504.04" y2="497" stroke="#cfcfcf" stroke-width="2" />
<text x="504.04" y="513.8" font-size="16.3" fill="#dedede" text-anchor="middle" font-weight="normal" stroke="#dedede" stroke-width="0.36" >14</text>
<text x="886.5" y="148" font-size="15.5" fill="#dedede" text-anchor="middle" font-weight="normal" stroke="#dedede" stroke-width="0.34" textLength="88" lengthAdjust="spacingAndGlyphs" >RGB Balance</text>
<rect x="597" y="155.1" width="608" height="336.2" fill="#222222" />
<line x1="591" y1="155.1" x2="597" y2="155.1" stroke="#cfcfcf" stroke-width="1.5" />
<text x="590.6" y="159.9" font-size="16.3" fill="#dedede" text-anchor="end" font-weight="normal" stroke="#dedede" stroke-width="0.36" >40</text>
<line x1="597" y1="197.12" x2="1205" y2="197.12" stroke="#a8a8a8" stroke-width="1.5" />
<line x1="591" y1="197.12" x2="597" y2="197.12" stroke="#cfcfcf" stroke-width="1.5" />
<text x="590.6" y="202.38" font-size="16.3" fill="#dedede" text-anchor="end" font-weight="normal" stroke="#dedede" stroke-width="0.36" >30</text>
<line x1="597" y1="239.15" x2="1205" y2="239.15" stroke="#a8a8a8" stroke-width="1.5" />
<line x1="591" y1="239.15" x2="597" y2="239.15" stroke="#cfcfcf" stroke-width="1.5" />
<text x="590.6" y="244.85" font-size="16.3" fill="#dedede" text-anchor="end" font-weight="normal" stroke="#dedede" stroke-width="0.36" >20</text>
<line x1="597" y1="281.18" x2="1205" y2="281.18" stroke="#a8a8a8" stroke-width="1.5" />
<line x1="591" y1="281.18" x2="597" y2="281.18" stroke="#cfcfcf" stroke-width="1.5" />
<text x="590.6" y="287.33" font-size="16.3" fill="#dedede" text-anchor="end" font-weight="normal" stroke="#dedede" stroke-width="0.36" >10</text>
<line x1="597" y1="323.2" x2="1205" y2="323.2" stroke="#a8a8a8" stroke-width="1.5" />
<line x1="591" y1="323.2" x2="597" y2="323.2" stroke="#cfcfcf" stroke-width="1.5" />
<text x="590.6" y="329.8" font-size="16.3" fill="#dedede" text-anchor="end" font-weight="normal" stroke="#dedede" stroke-width="0.36" >0</text>
<line x1="597" y1="365.23" x2="1205" y2="365.23" stroke="#a8a8a8" stroke-width="1.5" />
<line x1="591" y1="365.23" x2="597" y2="365.23" stroke="#cfcfcf" stroke-width="1.5" />
<text x="590.6" y="372.28" font-size="16.3" fill="#dedede" text-anchor="end" font-weight="normal" stroke="#dedede" stroke-width="0.36" >-10</text>
<line x1="597" y1="407.25" x2="1205" y2="407.25" stroke="#a8a8a8" stroke-width="1.5" />
<line x1="591" y1="407.25" x2="597" y2="407.25" stroke="#cfcfcf" stroke-width="1.5" />
<text x="590.6" y="414.75" font-size="16.3" fill="#dedede" text-anchor="end" font-weight="normal" stroke="#dedede" stroke-width="0.36" >-20</text>
<line x1="597" y1="449.28" x2="1205" y2="449.28" stroke="#a8a8a8" stroke-width="1.5" />
<line x1="591" y1="449.28" x2="597" y2="449.28" stroke="#cfcfcf" stroke-width="1.5" />
<text x="590.6" y="457.23" font-size="16.3" fill="#dedede" text-anchor="end" font-weight="normal" stroke="#dedede" stroke-width="0.36" >-30</text>
<line x1="591" y1="491.3" x2="597" y2="491.3" stroke="#cfcfcf" stroke-width="1.5" />
<text x="590.6" y="499.7" font-size="16.3" fill="#dedede" text-anchor="end" font-weight="normal" stroke="#dedede" stroke-width="0.36" >-40</text>
<polyline points="597.0,321.5 657.8,331.2 718.6,332.9 779.4,336.6 840.2,329.5 901.0,324.0 961.8,326.6 1022.6,326.1 1083.4,321.5 1144.2,319.0 1205.0,317.7" fill="none" stroke="#ff0000" stroke-width="3.2" stroke-linejoin="round"/>
<polyline points="597.0,321.5 657.8,329.9 718.6,332.4 779.4,338.3 840.2,334.5 901.0,330.8 961.8,332.4 1022.6,331.6 1083.4,327.0 1144.2,323.2 1205.0,320.7" fill="none" stroke="#008c00" stroke-width="3.2" stroke-linejoin="round"/>
<polyline points="597.0,321.1 657.8,333.5 718.6,337.1 779.4,343.8 840.2,342.5 901.0,341.3 961.8,344.6 1022.6,340.4 1083.4,335.8 1144.2,328.2 1205.0,323.2" fill="none" stroke="#0000ff" stroke-width="3.2" stroke-linejoin="round"/>
<path d="M597 491.3 V155.1 M1205 155.1 V491.3" fill="none" stroke="#9c9c9c" stroke-width="2"/>
<rect x="596" y="153" width="610" height="3.2" fill="#9c9c9c" />
<line x1="596" y1="491.6" x2="1206" y2="491.6" stroke="#c4c4c4" stroke-width="1.6" />
<line x1="597" y1="491.3" x2="597" y2="497.3" stroke="#cfcfcf" stroke-width="2" />
<text x="597" y="513.8" font-size="16.3" fill="#dedede" text-anchor="middle" font-weight="normal" stroke="#dedede" stroke-width="0.36" >0</text>
<line x1="657.8" y1="491.3" x2="657.8" y2="497.3" stroke="#cfcfcf" stroke-width="2" />
<text x="657.8" y="513.8" font-size="16.3" fill="#dedede" text-anchor="middle" font-weight="normal" stroke="#dedede" stroke-width="0.36" >10</text>
<line x1="718.6" y1="491.3" x2="718.6" y2="497.3" stroke="#cfcfcf" stroke-width="2" />
<text x="718.6" y="513.8" font-size="16.3" fill="#dedede" text-anchor="middle" font-weight="normal" stroke="#dedede" stroke-width="0.36" >20</text>
<line x1="779.4" y1="491.3" x2="779.4" y2="497.3" stroke="#cfcfcf" stroke-width="2" />
<text x="779.4" y="513.8" font-size="16.3" fill="#dedede" text-anchor="middle" font-weight="normal" stroke="#dedede" stroke-width="0.36" >30</text>
<line x1="840.2" y1="491.3" x2="840.2" y2="497.3" stroke="#cfcfcf" stroke-width="2" />
<text x="840.2" y="513.8" font-size="16.3" fill="#dedede" text-anchor="middle" font-weight="normal" stroke="#dedede" stroke-width="0.36" >40</text>
<line x1="901" y1="491.3" x2="901" y2="497.3" stroke="#cfcfcf" stroke-width="2" />
<text x="901" y="513.8" font-size="16.3" fill="#dedede" text-anchor="middle" font-weight="normal" stroke="#dedede" stroke-width="0.36" >50</text>
<line x1="961.8" y1="491.3" x2="961.8" y2="497.3" stroke="#cfcfcf" stroke-width="2" />
<text x="961.8" y="513.8" font-size="16.3" fill="#dedede" text-anchor="middle" font-weight="normal" stroke="#dedede" stroke-width="0.36" >60</text>
<line x1="1022.6" y1="491.3" x2="1022.6" y2="497.3" stroke="#cfcfcf" stroke-width="2" />
<text x="1022.6" y="513.8" font-size="16.3" fill="#dedede" text-anchor="middle" font-weight="normal" stroke="#dedede" stroke-width="0.36" >70</text>
<line x1="1083.4" y1="491.3" x2="1083.4" y2="497.3" stroke="#cfcfcf" stroke-width="2" />
<text x="1083.4" y="513.8" font-size="16.3" fill="#dedede" text-anchor="middle" font-weight="normal" stroke="#dedede" stroke-width="0.36" >80</text>
<line x1="1144.2" y1="491.3" x2="1144.2" y2="497.3" stroke="#cfcfcf" stroke-width="2" />
<text x="1144.2" y="513.8" font-size="16.3" fill="#dedede" text-anchor="middle" font-weight="normal" stroke="#dedede" stroke-width="0.36" >90</text>
<line x1="1205" y1="491.3" x2="1205" y2="497.3" stroke="#cfcfcf" stroke-width="2" />
<text x="1205" y="513.8" font-size="16.3" fill="#dedede" text-anchor="middle" font-weight="normal" stroke="#dedede" stroke-width="0.36" >100</text>
<text x="1323.5" y="148" font-size="15.5" fill="#dedede" text-anchor="middle" font-weight="normal" stroke="#dedede" stroke-width="0.34" textLength="88" lengthAdjust="spacingAndGlyphs" >RGB Balance</text>
<rect x="1260" y="155" width="147.6" height="341.8" fill="#222222" />
<line x1="1254" y1="155" x2="1260" y2="155" stroke="#cfcfcf" stroke-width="1.5" />
<text x="1253.5" y="159.8" font-size="16.3" fill="#dedede" text-anchor="end" font-weight="normal" stroke="#dedede" stroke-width="0.36" >4</text>
<line x1="1260" y1="197.72" x2="1407.6" y2="197.72" stroke="#a8a8a8" stroke-width="1.5" />
<line x1="1254" y1="197.72" x2="1260" y2="197.72" stroke="#cfcfcf" stroke-width="1.5" />
<text x="1253.5" y="202.97" font-size="16.3" fill="#dedede" text-anchor="end" font-weight="normal" stroke="#dedede" stroke-width="0.36" >3</text>
<line x1="1260" y1="240.45" x2="1407.6" y2="240.45" stroke="#a8a8a8" stroke-width="1.5" />
<line x1="1254" y1="240.45" x2="1260" y2="240.45" stroke="#cfcfcf" stroke-width="1.5" />
<text x="1253.5" y="246.15" font-size="16.3" fill="#dedede" text-anchor="end" font-weight="normal" stroke="#dedede" stroke-width="0.36" >2</text>
<line x1="1260" y1="283.18" x2="1407.6" y2="283.18" stroke="#a8a8a8" stroke-width="1.5" />
<line x1="1254" y1="283.18" x2="1260" y2="283.18" stroke="#cfcfcf" stroke-width="1.5" />
<text x="1253.5" y="289.33" font-size="16.3" fill="#dedede" text-anchor="end" font-weight="normal" stroke="#dedede" stroke-width="0.36" >1</text>
<line x1="1260" y1="325.9" x2="1407.6" y2="325.9" stroke="#a8a8a8" stroke-width="1.5" />
<line x1="1254" y1="325.9" x2="1260" y2="325.9" stroke="#cfcfcf" stroke-width="1.5" />
<text x="1253.5" y="332.5" font-size="16.3" fill="#dedede" text-anchor="end" font-weight="normal" stroke="#dedede" stroke-width="0.36" >0</text>
<line x1="1260" y1="368.62" x2="1407.6" y2="368.62" stroke="#a8a8a8" stroke-width="1.5" />
<line x1="1254" y1="368.62" x2="1260" y2="368.62" stroke="#cfcfcf" stroke-width="1.5" />
<text x="1253.5" y="375.68" font-size="16.3" fill="#dedede" text-anchor="end" font-weight="normal" stroke="#dedede" stroke-width="0.36" >-1</text>
<line x1="1260" y1="411.35" x2="1407.6" y2="411.35" stroke="#a8a8a8" stroke-width="1.5" />
<line x1="1254" y1="411.35" x2="1260" y2="411.35" stroke="#cfcfcf" stroke-width="1.5" />
<text x="1253.5" y="418.85" font-size="16.3" fill="#dedede" text-anchor="end" font-weight="normal" stroke="#dedede" stroke-width="0.36" >-2</text>
<line x1="1260" y1="454.07" x2="1407.6" y2="454.07" stroke="#a8a8a8" stroke-width="1.5" />
<line x1="1254" y1="454.07" x2="1260" y2="454.07" stroke="#cfcfcf" stroke-width="1.5" />
<text x="1253.5" y="462.02" font-size="16.3" fill="#dedede" text-anchor="end" font-weight="normal" stroke="#dedede" stroke-width="0.36" >-3</text>
<line x1="1254" y1="496.8" x2="1260" y2="496.8" stroke="#cfcfcf" stroke-width="1.5" />
<text x="1253.5" y="505.2" font-size="16.3" fill="#dedede" text-anchor="end" font-weight="normal" stroke="#dedede" stroke-width="0.36" >-4</text>
<rect x="1273.7" y="296.4" width="38.0" height="29.5" fill="url(#gR)" stroke="#000" stroke-width="1.5"/>
<rect x="1311.7" y="325.9" width="39.5" height="7.7" fill="url(#gG)" stroke="#000" stroke-width="1.5"/>
<rect x="1351.2" y="325.9" width="39.0" height="21.4" fill="url(#gB)" stroke="#000" stroke-width="1.5"/>
<path d="M1260 502.8 V155 H1407.6 V502.8" fill="none" stroke="#9c9c9c" stroke-width="2"/>
<line x1="1259" y1="497.1" x2="1408.6" y2="497.1" stroke="#c4c4c4" stroke-width="1.6" />
<text x="1333.5" y="513.8" font-size="16.3" fill="#dedede" text-anchor="middle" font-weight="normal" stroke="#dedede" stroke-width="0.36" >100</text>
<text x="1666" y="148" font-size="15.5" fill="#dedede" text-anchor="middle" font-weight="normal" stroke="#dedede" stroke-width="0.34" textLength="115" lengthAdjust="spacingAndGlyphs" >Gamma Log/Log</text>
<rect x="1470" y="154.7" width="420.5" height="336.7" fill="#222222" />
<line x1="1464" y1="154.7" x2="1470" y2="154.7" stroke="#cfcfcf" stroke-width="1.5" />
<text x="1463.5" y="159.5" font-size="16.3" fill="#dedede" text-anchor="end" font-weight="normal" stroke="#dedede" stroke-width="0.36" >2.8</text>
<line x1="1470" y1="222.04" x2="1890.5" y2="222.04" stroke="#a8a8a8" stroke-width="1.5" />
<line x1="1464" y1="222.04" x2="1470" y2="222.04" stroke="#cfcfcf" stroke-width="1.5" />
<text x="1463.5" y="227.56" font-size="16.3" fill="#dedede" text-anchor="end" font-weight="normal" stroke="#dedede" stroke-width="0.36" >2.6</text>
<line x1="1470" y1="289.38" x2="1890.5" y2="289.38" stroke="#a8a8a8" stroke-width="1.5" />
<line x1="1464" y1="289.38" x2="1470" y2="289.38" stroke="#cfcfcf" stroke-width="1.5" />
<text x="1463.5" y="295.62" font-size="16.3" fill="#dedede" text-anchor="end" font-weight="normal" stroke="#dedede" stroke-width="0.36" >2.4</text>
<line x1="1470" y1="356.72" x2="1890.5" y2="356.72" stroke="#a8a8a8" stroke-width="1.5" />
<line x1="1464" y1="356.72" x2="1470" y2="356.72" stroke="#cfcfcf" stroke-width="1.5" />
<text x="1463.5" y="363.68" font-size="16.3" fill="#dedede" text-anchor="end" font-weight="normal" stroke="#dedede" stroke-width="0.36" >2.2</text>
<line x1="1470" y1="424.06" x2="1890.5" y2="424.06" stroke="#a8a8a8" stroke-width="1.5" />
<line x1="1464" y1="424.06" x2="1470" y2="424.06" stroke="#cfcfcf" stroke-width="1.5" />
<text x="1463.5" y="431.74" font-size="16.3" fill="#dedede" text-anchor="end" font-weight="normal" stroke="#dedede" stroke-width="0.36" >2</text>
<line x1="1464" y1="491.4" x2="1470" y2="491.4" stroke="#cfcfcf" stroke-width="1.5" />
<text x="1463.5" y="499.8" font-size="16.3" fill="#dedede" text-anchor="end" font-weight="normal" stroke="#dedede" stroke-width="0.36" >1.8</text>
<polyline points="1470.0,356.7 1512.0,336.5 1554.1,340.7 1596.2,331.9 1638.2,337.1 1680.2,342.5 1722.3,335.7 1764.3,333.0 1806.4,336.5 1848.5,344.9 1890.5,356.7" fill="none" stroke="#8a8a8a" stroke-width="3" stroke-linejoin="round"/>
<line x1="1470" y1="356.72" x2="1890.5" y2="356.72" stroke="#ffff00" stroke-width="3.5" />
<path d="M1470 491.4 V154.7 M1890.5 154.7 V491.4" fill="none" stroke="#9c9c9c" stroke-width="2"/>
<rect x="1469" y="153.1" width="422.5" height="3.2" fill="#9c9c9c" />
<line x1="1469" y1="491.7" x2="1891.5" y2="491.7" stroke="#c4c4c4" stroke-width="1.6" />
<line x1="1470" y1="491.4" x2="1470" y2="497.4" stroke="#cfcfcf" stroke-width="2" />
<text x="1470" y="513.8" font-size="16.3" fill="#dedede" text-anchor="middle" font-weight="normal" stroke="#dedede" stroke-width="0.36" >0</text>
<line x1="1554.1" y1="491.4" x2="1554.1" y2="497.4" stroke="#cfcfcf" stroke-width="2" />
<text x="1554.1" y="513.8" font-size="16.3" fill="#dedede" text-anchor="middle" font-weight="normal" stroke="#dedede" stroke-width="0.36" >20</text>
<line x1="1638.2" y1="491.4" x2="1638.2" y2="497.4" stroke="#cfcfcf" stroke-width="2" />
<text x="1638.2" y="513.8" font-size="16.3" fill="#dedede" text-anchor="middle" font-weight="normal" stroke="#dedede" stroke-width="0.36" >40</text>
<line x1="1722.3" y1="491.4" x2="1722.3" y2="497.4" stroke="#cfcfcf" stroke-width="2" />
<text x="1722.3" y="513.8" font-size="16.3" fill="#dedede" text-anchor="middle" font-weight="normal" stroke="#dedede" stroke-width="0.36" >60</text>
<line x1="1806.4" y1="491.4" x2="1806.4" y2="497.4" stroke="#cfcfcf" stroke-width="2" />
<text x="1806.4" y="513.8" font-size="16.3" fill="#dedede" text-anchor="middle" font-weight="normal" stroke="#dedede" stroke-width="0.36" >80</text>
<line x1="1890.5" y1="491.4" x2="1890.5" y2="497.4" stroke="#cfcfcf" stroke-width="2" />
<text x="1890.5" y="513.8" font-size="16.3" fill="#dedede" text-anchor="middle" font-weight="normal" stroke="#dedede" stroke-width="0.36" >100</text>
<text x="241" y="558.2" font-size="31" fill="#f2f2f2" text-anchor="start" font-weight="normal" stroke="#f2f2f2" stroke-width="0.68" textLength="229.7" lengthAdjust="spacingAndGlyphs" >Avg dE2000: 1.1</text>
<text x="677.9" y="558.2" font-size="31" fill="#f2f2f2" text-anchor="start" font-weight="normal" stroke="#f2f2f2" stroke-width="0.68" textLength="200.7" lengthAdjust="spacingAndGlyphs" >Avg CCT: 6331</text>
<text x="1005.2" y="558.2" font-size="31" fill="#f2f2f2" text-anchor="start" font-weight="normal" stroke="#f2f2f2" stroke-width="0.68" textLength="433.8" lengthAdjust="spacingAndGlyphs" >Contrast Ratio: 386198057472</text>
<text x="1499.3" y="558.2" font-size="31" fill="#f2f2f2" text-anchor="start" font-weight="normal" stroke="#f2f2f2" stroke-width="0.68" textLength="334.1" lengthAdjust="spacingAndGlyphs" >Average Gamma: 2.257</text>
<rect x="150" y="579" width="1769" height="139" fill="#000000" />
<line x1="251.5" y1="579" x2="251.5" y2="718" stroke="#0f0f0f" stroke-width="1" />
<line x1="1904" y1="579" x2="1904" y2="718" stroke="#0c0c0c" stroke-width="1" />
<text transform="translate(266 628.5) rotate(-90)" font-size="13.5" fill="#f0f0f0" textLength="37.5" lengthAdjust="spacingAndGlyphs">Actual</text>
<text transform="translate(266 689) rotate(-90)" font-size="13.5" fill="#f0f0f0" textLength="37" lengthAdjust="spacingAndGlyphs">Target</text>
<rect x="275" y="585" width="129" height="108.7" fill="#ffffff" />
<rect x="276.4" y="586.4" width="126.2" height="53.6" fill="rgb(0,0,0)" />
<rect x="276.4" y="640" width="126.2" height="52.3" fill="rgb(0,0,0)" />
<text x="339.5" y="709.6" font-size="13.5" fill="#f4f4f4" text-anchor="middle" font-weight="normal" stroke="#f4f4f4" stroke-width="0.30" >0</text>
<rect x="424" y="585" width="129" height="108.7" fill="#ffffff" />
<rect x="425.4" y="586.4" width="126.2" height="53.6" fill="rgb(17,17,17)" />
<rect x="425.4" y="640" width="126.2" height="52.3" fill="rgb(19,19,19)" />
<text x="488.5" y="709.6" font-size="13.5" fill="#f4f4f4" text-anchor="middle" font-weight="normal" stroke="#f4f4f4" stroke-width="0.30" >10</text>
<rect x="573" y="585" width="129" height="108.7" fill="#ffffff" />
<rect x="574.4" y="586.4" width="126.2" height="53.6" fill="rgb(46,46,46)" />
<rect x="574.4" y="640" width="126.2" height="52.3" fill="rgb(48,48,48)" />
<text x="637.5" y="709.6" font-size="13.5" fill="#f4f4f4" text-anchor="middle" font-weight="normal" stroke="#f4f4f4" stroke-width="0.30" >20</text>
<rect x="722" y="585" width="129" height="108.7" fill="#ffffff" />
<rect x="723.4" y="586.4" width="126.2" height="53.6" fill="rgb(71,71,71)" />
<rect x="723.4" y="640" width="126.2" height="52.3" fill="rgb(75,75,75)" />
<text x="786.5" y="709.6" font-size="13.5" fill="#f4f4f4" text-anchor="middle" font-weight="normal" stroke="#f4f4f4" stroke-width="0.30" >30</text>
<rect x="871" y="585" width="129" height="108.7" fill="#ffffff" />
<rect x="872.4" y="586.4" width="126.2" height="53.6" fill="rgb(100,100,100)" />
<rect x="872.4" y="640" width="126.2" height="52.3" fill="rgb(102,102,102)" />
<text x="935.5" y="709.6" font-size="13.5" fill="#f4f4f4" text-anchor="middle" font-weight="normal" stroke="#f4f4f4" stroke-width="0.30" >40</text>
<rect x="1020" y="585" width="129" height="108.7" fill="#ffffff" />
<rect x="1021.4" y="586.4" width="126.2" height="53.6" fill="rgb(127,127,127)" />
<rect x="1021.4" y="640" width="126.2" height="52.3" fill="rgb(129,129,129)" />
<text x="1084.5" y="709.6" font-size="13.5" fill="#f4f4f4" text-anchor="middle" font-weight="normal" stroke="#f4f4f4" stroke-width="0.30" >50</text>
<rect x="1169" y="585" width="129" height="108.7" fill="#ffffff" />
<rect x="1170.4" y="586.4" width="126.2" height="53.6" fill="rgb(152,152,152)" />
<rect x="1170.4" y="640" width="126.2" height="52.3" fill="rgb(154,154,154)" />
<text x="1233.5" y="709.6" font-size="13.5" fill="#f4f4f4" text-anchor="middle" font-weight="normal" stroke="#f4f4f4" stroke-width="0.30" >60</text>
<rect x="1318" y="585" width="129" height="108.7" fill="#ffffff" />
<rect x="1319.4" y="586.4" width="126.2" height="53.6" fill="rgb(177,177,177)" />
<rect x="1319.4" y="640" width="126.2" height="52.3" fill="rgb(179,179,179)" />
<text x="1382.5" y="709.6" font-size="13.5" fill="#f4f4f4" text-anchor="middle" font-weight="normal" stroke="#f4f4f4" stroke-width="0.30" >70</text>
<rect x="1467" y="585" width="129" height="108.7" fill="#ffffff" />
<rect x="1468.4" y="586.4" width="126.2" height="53.6" fill="rgb(204,204,204)" />
<rect x="1468.4" y="640" width="126.2" height="52.3" fill="rgb(205,205,205)" />
<text x="1531.5" y="709.6" font-size="13.5" fill="#f4f4f4" text-anchor="middle" font-weight="normal" stroke="#f4f4f4" stroke-width="0.30" >80</text>
<rect x="1616" y="585" width="129" height="108.7" fill="#ffffff" />
<rect x="1617.4" y="586.4" width="126.2" height="53.6" fill="rgb(230,230,230)" />
<rect x="1617.4" y="640" width="126.2" height="52.3" fill="rgb(231,231,231)" />
<text x="1680.5" y="709.6" font-size="13.5" fill="#f4f4f4" text-anchor="middle" font-weight="normal" stroke="#f4f4f4" stroke-width="0.30" >90</text>
<rect x="1765" y="585" width="129" height="108.7" fill="#ffffff" />
<rect x="1766.4" y="586.4" width="126.2" height="53.6" fill="rgb(255,255,255)" />
<rect x="1766.4" y="640" width="126.2" height="52.3" fill="rgb(255,255,255)" />
<text x="1829.5" y="709.6" font-size="13.5" fill="#f4f4f4" text-anchor="middle" font-weight="normal" stroke="#f4f4f4" stroke-width="0.30" >100</text>
<text x="172.8" y="789.6" font-size="31.5" fill="#f0f0f0" text-anchor="start" font-weight="normal" stroke="#f0f0f0" stroke-width="0.69" textLength="231.5" lengthAdjust="spacingAndGlyphs" >Current Reading</text>
<text x="172.8" y="833.9" font-size="26" fill="#f4f4f4" text-anchor="start" font-weight="normal" stroke="#f4f4f4" stroke-width="0.57" textLength="108.7" lengthAdjust="spacingAndGlyphs" >x: 0.3136</text>
<text x="331.5" y="833.9" font-size="26" fill="#f4f4f4" text-anchor="start" font-weight="normal" stroke="#f4f4f4" stroke-width="0.57" textLength="108.7" lengthAdjust="spacingAndGlyphs" >y: 0.3293</text>
<text x="172.8" y="870" font-size="26" fill="#f4f4f4" text-anchor="start" font-weight="normal" stroke="#f4f4f4" stroke-width="0.57" textLength="117.4" lengthAdjust="spacingAndGlyphs" >u': 0.1983</text>
<text x="331.5" y="870" font-size="26" fill="#f4f4f4" text-anchor="start" font-weight="normal" stroke="#f4f4f4" stroke-width="0.57" textLength="115.2" lengthAdjust="spacingAndGlyphs" >v': 0.4686</text>
<text x="172.8" y="906.3" font-size="26" fill="#f4f4f4" text-anchor="start" font-weight="normal" stroke="#f4f4f4" stroke-width="0.57" textLength="197.9" lengthAdjust="spacingAndGlyphs" >cd/m²: 386.1981</text>
<text x="172.8" y="942.6" font-size="26" fill="#f4f4f4" text-anchor="start" font-weight="normal" stroke="#f4f4f4" stroke-width="0.57" textLength="163.1" lengthAdjust="spacingAndGlyphs" >ΔE 2000: 0.52</text>
<text x="652.2" y="752.7" font-size="14.5" fill="#dedede" text-anchor="middle" font-weight="normal" stroke="#dedede" stroke-width="0.32" textLength="79.4" lengthAdjust="spacingAndGlyphs" >CIE 1931 xy</text>
<rect x="537" y="758.8" width="267.1" height="6.09" fill="url(#gC0)" shape-rendering="crispEdges"/>
<rect x="537" y="763.69" width="267.1" height="6.09" fill="url(#gC1)" shape-rendering="crispEdges"/>
<rect x="537" y="768.58" width="267.1" height="6.09" fill="url(#gC2)" shape-rendering="crispEdges"/>
<rect x="537" y="773.47" width="267.1" height="6.09" fill="url(#gC3)" shape-rendering="crispEdges"/>
<rect x="537" y="778.36" width="267.1" height="6.09" fill="url(#gC4)" shape-rendering="crispEdges"/>
<rect x="537" y="783.24" width="267.1" height="6.09" fill="url(#gC5)" shape-rendering="crispEdges"/>
<rect x="537" y="788.13" width="267.1" height="6.09" fill="url(#gC6)" shape-rendering="crispEdges"/>
<rect x="537" y="793.02" width="267.1" height="6.09" fill="url(#gC7)" shape-rendering="crispEdges"/>
<rect x="537" y="797.91" width="267.1" height="6.09" fill="url(#gC8)" shape-rendering="crispEdges"/>
<rect x="537" y="802.8" width="267.1" height="6.09" fill="url(#gC9)" shape-rendering="crispEdges"/>
<rect x="537" y="807.69" width="267.1" height="6.09" fill="url(#gC10)" shape-rendering="crispEdges"/>
<rect x="537" y="812.58" width="267.1" height="6.09" fill="url(#gC11)" shape-rendering="crispEdges"/>
<rect x="537" y="817.47" width="267.1" height="6.09" fill="url(#gC12)" shape-rendering="crispEdges"/>
<rect x="537" y="822.36" width="267.1" height="6.09" fill="url(#gC13)" shape-rendering="crispEdges"/>
<rect x="537" y="827.24" width="267.1" height="6.09" fill="url(#gC14)" shape-rendering="crispEdges"/>
<rect x="537" y="832.13" width="267.1" height="6.09" fill="url(#gC15)" shape-rendering="crispEdges"/>
<rect x="537" y="837.02" width="267.1" height="6.09" fill="url(#gC16)" shape-rendering="crispEdges"/>
<rect x="537" y="841.91" width="267.1" height="6.09" fill="url(#gC17)" shape-rendering="crispEdges"/>
<rect x="537" y="846.8" width="267.1" height="6.09" fill="url(#gC18)" shape-rendering="crispEdges"/>
<rect x="537" y="851.69" width="267.1" height="6.09" fill="url(#gC19)" shape-rendering="crispEdges"/>
<rect x="537" y="856.58" width="267.1" height="6.09" fill="url(#gC20)" shape-rendering="crispEdges"/>
<rect x="537" y="861.47" width="267.1" height="6.09" fill="url(#gC21)" shape-rendering="crispEdges"/>
<rect x="537" y="866.36" width="267.1" height="6.09" fill="url(#gC22)" shape-rendering="crispEdges"/>
<rect x="537" y="871.24" width="267.1" height="6.09" fill="url(#gC23)" shape-rendering="crispEdges"/>
<rect x="537" y="876.13" width="267.1" height="6.09" fill="url(#gC24)" shape-rendering="crispEdges"/>
<rect x="537" y="881.02" width="267.1" height="6.09" fill="url(#gC25)" shape-rendering="crispEdges"/>
<rect x="537" y="885.91" width="267.1" height="6.09" fill="url(#gC26)" shape-rendering="crispEdges"/>
<rect x="537" y="890.8" width="267.1" height="6.09" fill="url(#gC27)" shape-rendering="crispEdges"/>
<rect x="537" y="895.69" width="267.1" height="6.09" fill="url(#gC28)" shape-rendering="crispEdges"/>
<rect x="537" y="900.58" width="267.1" height="6.09" fill="url(#gC29)" shape-rendering="crispEdges"/>
<rect x="537" y="905.47" width="267.1" height="6.09" fill="url(#gC30)" shape-rendering="crispEdges"/>
<rect x="537" y="910.36" width="267.1" height="6.09" fill="url(#gC31)" shape-rendering="crispEdges"/>
<rect x="537" y="915.24" width="267.1" height="6.09" fill="url(#gC32)" shape-rendering="crispEdges"/>
<rect x="537" y="920.13" width="267.1" height="6.09" fill="url(#gC33)" shape-rendering="crispEdges"/>
<rect x="537" y="925.02" width="267.1" height="6.09" fill="url(#gC34)" shape-rendering="crispEdges"/>
<rect x="537" y="929.91" width="267.1" height="6.09" fill="url(#gC35)" shape-rendering="crispEdges"/>
<clipPath id="cpC"><rect x="537" y="758.8" width="267.1" height="176.0"/></clipPath>
<polyline points="565.0,939.6 575.1,932.3 585.2,925.0 595.4,917.8 605.5,910.7 615.6,903.6 625.8,896.7 635.9,889.8 646.0,883.0 656.1,876.3 666.2,869.6 676.4,863.0 686.5,856.6 696.6,850.2 706.8,843.8 716.9,837.6 727.0,831.4 737.1,825.3 747.2,819.3 757.4,813.4 767.5,807.6 777.6,801.8 787.8,796.1 797.9,790.5 808.0,785.0" fill="none" stroke="#000" stroke-width="3.1" clip-path="url(#cpC)"/>
<circle cx="779.9" cy="830.9" r="5" fill="#000"/>
<rect x="663.5" y="838.7" width="14" height="13.5" fill="#fff" stroke="#000" stroke-width="1.6"/>
<circle cx="682.8" cy="824.2" r="5" fill="rgb(26,26,26)" stroke="#111" stroke-width="0.9"/>
<circle cx="683.3" cy="831.5" r="5" fill="rgb(51,51,51)" stroke="#111" stroke-width="0.9"/>
<circle cx="684.9" cy="834.7" r="5" fill="rgb(76,76,76)" stroke="#111" stroke-width="0.9"/>
<circle cx="691.8" cy="832.9" r="5" fill="rgb(102,102,102)" stroke="#111" stroke-width="0.9"/>
<circle cx="695.0" cy="831.5" r="5" fill="rgb(127,127,127)" stroke="#111" stroke-width="0.9"/>
<circle cx="692.4" cy="831.9" r="5" fill="rgb(153,153,153)" stroke="#111" stroke-width="0.9"/>
<circle cx="686.5" cy="836.1" r="5" fill="rgb(178,178,178)" stroke="#111" stroke-width="0.9"/>
<circle cx="682.8" cy="838.9" r="5" fill="rgb(204,204,204)" stroke="#111" stroke-width="0.9"/>
<circle cx="678.0" cy="842.4" r="5" fill="rgb(229,229,229)" stroke="#111" stroke-width="0.9"/>
<circle cx="674.8" cy="845.2" r="5" fill="rgb(255,255,255)" stroke="#111" stroke-width="0.9"/>
<rect x="537" y="758.8" width="267.1" height="176.0" fill="none" stroke="#8c8c8c" stroke-width="2"/>
<line x1="530" y1="809.78" x2="537" y2="809.78" stroke="#cfcfcf" stroke-width="1.5" />
<text x="529.7" y="815.08" font-size="15" fill="#dedede" text-anchor="end" font-weight="normal" stroke="#dedede" stroke-width="0.33" >0.34</text>
<line x1="530" y1="879.68" x2="537" y2="879.68" stroke="#cfcfcf" stroke-width="1.5" />
<text x="529.7" y="884.98" font-size="15" fill="#dedede" text-anchor="end" font-weight="normal" stroke="#dedede" stroke-width="0.33" >0.32</text>
<line x1="548.99" y1="934.8" x2="548.99" y2="940.8" stroke="#cfcfcf" stroke-width="1.5" />
<text x="548.99" y="956.8" font-size="15" fill="#dedede" text-anchor="middle" font-weight="normal" stroke="#dedede" stroke-width="0.33" >0.29</text>
<line x1="602.29" y1="934.8" x2="602.29" y2="940.8" stroke="#cfcfcf" stroke-width="1.5" />
<text x="602.29" y="956.8" font-size="15" fill="#dedede" text-anchor="middle" font-weight="normal" stroke="#dedede" stroke-width="0.33" >0.3</text>
<line x1="655.59" y1="934.8" x2="655.59" y2="940.8" stroke="#cfcfcf" stroke-width="1.5" />
<text x="655.59" y="956.8" font-size="15" fill="#dedede" text-anchor="middle" font-weight="normal" stroke="#dedede" stroke-width="0.33" >0.31</text>
<line x1="708.89" y1="934.8" x2="708.89" y2="940.8" stroke="#cfcfcf" stroke-width="1.5" />
<text x="708.89" y="956.8" font-size="15" fill="#dedede" text-anchor="middle" font-weight="normal" stroke="#dedede" stroke-width="0.33" >0.32</text>
<line x1="762.19" y1="934.8" x2="762.19" y2="940.8" stroke="#cfcfcf" stroke-width="1.5" />
<text x="762.19" y="956.8" font-size="15" fill="#dedede" text-anchor="middle" font-weight="normal" stroke="#dedede" stroke-width="0.33" >0.33</text>
<rect x="815" y="728" width="1096" height="244" fill="none" stroke="#242424" stroke-width="2.6"/>
<rect x="815" y="728" width="1096" height="244" fill="none" stroke="#d4d4d4" stroke-width="1.8" stroke-dasharray="2.1 2.2"/>
<rect x="816.5" y="729" width="10.5" height="26" fill="#000000" />
<rect x="827" y="729" width="890.4" height="12.5" fill="#2c2c2c" />
<rect x="827" y="741.5" width="890.4" height="13.5" fill="#171717" />
<text x="941" y="747" font-size="14" fill="#f0f0f0" text-anchor="start" font-weight="normal" stroke="#f0f0f0" stroke-width="0.31" >0</text>
<text x="1011.87" y="747" font-size="14" fill="#f0f0f0" text-anchor="start" font-weight="normal" stroke="#f0f0f0" stroke-width="0.31" >10</text>
<text x="1082.74" y="747" font-size="14" fill="#f0f0f0" text-anchor="start" font-weight="normal" stroke="#f0f0f0" stroke-width="0.31" >20</text>
<text x="1153.61" y="747" font-size="14" fill="#f0f0f0" text-anchor="start" font-weight="normal" stroke="#f0f0f0" stroke-width="0.31" >30</text>
<text x="1224.48" y="747" font-size="14" fill="#f0f0f0" text-anchor="start" font-weight="normal" stroke="#f0f0f0" stroke-width="0.31" >40</text>
<text x="1295.35" y="747" font-size="14" fill="#f0f0f0" text-anchor="start" font-weight="normal" stroke="#f0f0f0" stroke-width="0.31" >50</text>
<text x="1366.22" y="747" font-size="14" fill="#f0f0f0" text-anchor="start" font-weight="normal" stroke="#f0f0f0" stroke-width="0.31" >60</text>
<text x="1437.09" y="747" font-size="14" fill="#f0f0f0" text-anchor="start" font-weight="normal" stroke="#f0f0f0" stroke-width="0.31" >70</text>
<text x="1507.96" y="747" font-size="14" fill="#f0f0f0" text-anchor="start" font-weight="normal" stroke="#f0f0f0" stroke-width="0.31" >80</text>
<text x="1578.83" y="747" font-size="14" fill="#f0f0f0" text-anchor="start" font-weight="normal" stroke="#f0f0f0" stroke-width="0.31" >90</text>
<text x="1649.7" y="747" font-size="14" fill="#f0f0f0" text-anchor="start" font-weight="normal" stroke="#f0f0f0" stroke-width="0.31" >100</text>
<rect x="816.5" y="755" width="10.5" height="24.6" fill="#2a2a2a" />
<rect x="827" y="755" width="890.4" height="24.6" fill="#3d3d3d" />
<text x="830.9" y="772.6" font-size="14" fill="#f2f2f2" text-anchor="start" font-weight="normal" stroke="#f2f2f2" stroke-width="0.31" textLength="44" lengthAdjust="spacingAndGlyphs" >x: CIE31</text>
<text x="941" y="772.6" font-size="14" fill="#f2f2f2" text-anchor="start" font-weight="normal" stroke="#f2f2f2" stroke-width="0.31" textLength="39.8" lengthAdjust="spacingAndGlyphs" >0.3333</text>
<text x="1011.87" y="772.6" font-size="14" fill="#f2f2f2" text-anchor="start" font-weight="normal" stroke="#f2f2f2" stroke-width="0.31" textLength="39.8" lengthAdjust="spacingAndGlyphs" >0.3151</text>
<text x="1082.74" y="772.6" font-size="14" fill="#f2f2f2" text-anchor="start" font-weight="normal" stroke="#f2f2f2" stroke-width="0.31" textLength="39.8" lengthAdjust="spacingAndGlyphs" >0.3152</text>
<text x="1153.61" y="772.6" font-size="14" fill="#f2f2f2" text-anchor="start" font-weight="normal" stroke="#f2f2f2" stroke-width="0.31" textLength="39.8" lengthAdjust="spacingAndGlyphs" >0.3155</text>
<text x="1224.48" y="772.6" font-size="14" fill="#f2f2f2" text-anchor="start" font-weight="normal" stroke="#f2f2f2" stroke-width="0.31" textLength="39.8" lengthAdjust="spacingAndGlyphs" >0.3168</text>
<text x="1295.35" y="772.6" font-size="14" fill="#f2f2f2" text-anchor="start" font-weight="normal" stroke="#f2f2f2" stroke-width="0.31" textLength="39.8" lengthAdjust="spacingAndGlyphs" >0.3174</text>
<text x="1366.22" y="772.6" font-size="14" fill="#f2f2f2" text-anchor="start" font-weight="normal" stroke="#f2f2f2" stroke-width="0.31" textLength="39.8" lengthAdjust="spacingAndGlyphs" >0.3169</text>
<text x="1437.09" y="772.6" font-size="14" fill="#f2f2f2" text-anchor="start" font-weight="normal" stroke="#f2f2f2" stroke-width="0.31" textLength="39.8" lengthAdjust="spacingAndGlyphs" >0.3158</text>
<text x="1507.96" y="772.6" font-size="14" fill="#f2f2f2" text-anchor="start" font-weight="normal" stroke="#f2f2f2" stroke-width="0.31" textLength="39.8" lengthAdjust="spacingAndGlyphs" >0.3151</text>
<text x="1578.83" y="772.6" font-size="14" fill="#f2f2f2" text-anchor="start" font-weight="normal" stroke="#f2f2f2" stroke-width="0.31" textLength="39.8" lengthAdjust="spacingAndGlyphs" >0.3142</text>
<text x="1649.7" y="772.6" font-size="14" fill="#f2f2f2" text-anchor="start" font-weight="normal" stroke="#f2f2f2" stroke-width="0.31" textLength="39.8" lengthAdjust="spacingAndGlyphs" >0.3136</text>
<rect x="816.5" y="779.6" width="10.5" height="24.6" fill="#2a2a2a" />
<rect x="827" y="779.6" width="890.4" height="24.6" fill="#7a7a7a" />
<text x="830.9" y="797.2" font-size="14" fill="#f2f2f2" text-anchor="start" font-weight="normal" stroke="#f2f2f2" stroke-width="0.31" textLength="44.5" lengthAdjust="spacingAndGlyphs" >y: CIE31</text>
<text x="941" y="797.2" font-size="14" fill="#f2f2f2" text-anchor="start" font-weight="normal" stroke="#f2f2f2" stroke-width="0.31" textLength="39.8" lengthAdjust="spacingAndGlyphs" >0.3333</text>
<text x="1011.87" y="797.2" font-size="14" fill="#f2f2f2" text-anchor="start" font-weight="normal" stroke="#f2f2f2" stroke-width="0.31" textLength="39.8" lengthAdjust="spacingAndGlyphs" >0.3353</text>
<text x="1082.74" y="797.2" font-size="14" fill="#f2f2f2" text-anchor="start" font-weight="normal" stroke="#f2f2f2" stroke-width="0.31" textLength="39.8" lengthAdjust="spacingAndGlyphs" >0.3332</text>
<text x="1153.61" y="797.2" font-size="14" fill="#f2f2f2" text-anchor="start" font-weight="normal" stroke="#f2f2f2" stroke-width="0.31" textLength="39.8" lengthAdjust="spacingAndGlyphs" >0.3323</text>
<text x="1224.48" y="797.2" font-size="14" fill="#f2f2f2" text-anchor="start" font-weight="normal" stroke="#f2f2f2" stroke-width="0.31" textLength="39.8" lengthAdjust="spacingAndGlyphs" >0.3328</text>
<text x="1295.35" y="797.2" font-size="14" fill="#f2f2f2" text-anchor="start" font-weight="normal" stroke="#f2f2f2" stroke-width="0.31" textLength="39.8" lengthAdjust="spacingAndGlyphs" >0.3332</text>
<text x="1366.22" y="797.2" font-size="14" fill="#f2f2f2" text-anchor="start" font-weight="normal" stroke="#f2f2f2" stroke-width="0.31" textLength="39.8" lengthAdjust="spacingAndGlyphs" >0.3331</text>
<text x="1437.09" y="797.2" font-size="14" fill="#f2f2f2" text-anchor="start" font-weight="normal" stroke="#f2f2f2" stroke-width="0.31" textLength="39.8" lengthAdjust="spacingAndGlyphs" >0.3319</text>
<text x="1507.96" y="797.2" font-size="14" fill="#f2f2f2" text-anchor="start" font-weight="normal" stroke="#f2f2f2" stroke-width="0.31" textLength="39.8" lengthAdjust="spacingAndGlyphs" >0.3311</text>
<text x="1578.83" y="797.2" font-size="14" fill="#f2f2f2" text-anchor="start" font-weight="normal" stroke="#f2f2f2" stroke-width="0.31" textLength="39.8" lengthAdjust="spacingAndGlyphs" >0.3301</text>
<text x="1649.7" y="797.2" font-size="14" fill="#f2f2f2" text-anchor="start" font-weight="normal" stroke="#f2f2f2" stroke-width="0.31" textLength="39.8" lengthAdjust="spacingAndGlyphs" >0.3293</text>
<rect x="816.5" y="804.2" width="10.5" height="24.6" fill="#2a2a2a" />
<rect x="827" y="804.2" width="890.4" height="24.6" fill="#3d3d3d" />
<text x="830.9" y="821.8" font-size="14" fill="#f2f2f2" text-anchor="start" font-weight="normal" stroke="#f2f2f2" stroke-width="0.31" textLength="8.5" lengthAdjust="spacingAndGlyphs" >Y</text>
<text x="941" y="821.8" font-size="14" fill="#f2f2f2" text-anchor="start" font-weight="normal" stroke="#f2f2f2" stroke-width="0.31" textLength="39.8" lengthAdjust="spacingAndGlyphs" >0.0000</text>
<text x="1011.87" y="821.8" font-size="14" fill="#f2f2f2" text-anchor="start" font-weight="normal" stroke="#f2f2f2" stroke-width="0.31" textLength="39.8" lengthAdjust="spacingAndGlyphs" >2.2165</text>
<text x="1082.74" y="821.8" font-size="14" fill="#f2f2f2" text-anchor="start" font-weight="normal" stroke="#f2f2f2" stroke-width="0.31" textLength="47.1" lengthAdjust="spacingAndGlyphs" >10.3708</text>
<text x="1153.61" y="821.8" font-size="14" fill="#f2f2f2" text-anchor="start" font-weight="normal" stroke="#f2f2f2" stroke-width="0.31" textLength="47.1" lengthAdjust="spacingAndGlyphs" >24.6293</text>
<text x="1224.48" y="821.8" font-size="14" fill="#f2f2f2" text-anchor="start" font-weight="normal" stroke="#f2f2f2" stroke-width="0.31" textLength="47.1" lengthAdjust="spacingAndGlyphs" >48.7708</text>
<text x="1295.35" y="821.8" font-size="14" fill="#f2f2f2" text-anchor="start" font-weight="normal" stroke="#f2f2f2" stroke-width="0.31" textLength="47.1" lengthAdjust="spacingAndGlyphs" >82.3431</text>
<text x="1366.22" y="821.8" font-size="14" fill="#f2f2f2" text-anchor="start" font-weight="normal" stroke="#f2f2f2" stroke-width="0.31" textLength="54.4" lengthAdjust="spacingAndGlyphs" >121.5892</text>
<text x="1437.09" y="821.8" font-size="14" fill="#f2f2f2" text-anchor="start" font-weight="normal" stroke="#f2f2f2" stroke-width="0.31" textLength="54.4" lengthAdjust="spacingAndGlyphs" >170.7417</text>
<text x="1507.96" y="821.8" font-size="14" fill="#f2f2f2" text-anchor="start" font-weight="normal" stroke="#f2f2f2" stroke-width="0.31" textLength="54.4" lengthAdjust="spacingAndGlyphs" >233.2321</text>
<text x="1578.83" y="821.8" font-size="14" fill="#f2f2f2" text-anchor="start" font-weight="normal" stroke="#f2f2f2" stroke-width="0.31" textLength="54.4" lengthAdjust="spacingAndGlyphs" >306.6551</text>
<text x="1649.7" y="821.8" font-size="14" fill="#f2f2f2" text-anchor="start" font-weight="normal" stroke="#f2f2f2" stroke-width="0.31" textLength="54.4" lengthAdjust="spacingAndGlyphs" >386.1981</text>
<rect x="816.5" y="828.8" width="10.5" height="24.6" fill="#2a2a2a" />
<rect x="827" y="828.8" width="890.4" height="24.6" fill="#7a7a7a" />
<text x="830.9" y="846.4" font-size="14" fill="#f2f2f2" text-anchor="start" font-weight="normal" stroke="#f2f2f2" stroke-width="0.31" textLength="49" lengthAdjust="spacingAndGlyphs" >Target Y</text>
<text x="941" y="846.4" font-size="14" fill="#f2f2f2" text-anchor="start" font-weight="normal" stroke="#f2f2f2" stroke-width="0.31" textLength="39.8" lengthAdjust="spacingAndGlyphs" >0.0000</text>
<text x="1011.87" y="846.4" font-size="14" fill="#f2f2f2" text-anchor="start" font-weight="normal" stroke="#f2f2f2" stroke-width="0.31" textLength="39.8" lengthAdjust="spacingAndGlyphs" >2.5431</text>
<text x="1082.74" y="846.4" font-size="14" fill="#f2f2f2" text-anchor="start" font-weight="normal" stroke="#f2f2f2" stroke-width="0.31" textLength="47.1" lengthAdjust="spacingAndGlyphs" >11.1963</text>
<text x="1153.61" y="846.4" font-size="14" fill="#f2f2f2" text-anchor="start" font-weight="normal" stroke="#f2f2f2" stroke-width="0.31" textLength="47.1" lengthAdjust="spacingAndGlyphs" >26.9285</text>
<text x="1224.48" y="846.4" font-size="14" fill="#f2f2f2" text-anchor="start" font-weight="normal" stroke="#f2f2f2" stroke-width="0.31" textLength="47.1" lengthAdjust="spacingAndGlyphs" >51.4449</text>
<text x="1295.35" y="846.4" font-size="14" fill="#f2f2f2" text-anchor="start" font-weight="normal" stroke="#f2f2f2" stroke-width="0.31" textLength="47.1" lengthAdjust="spacingAndGlyphs" >84.7781</text>
<text x="1366.22" y="846.4" font-size="14" fill="#f2f2f2" text-anchor="start" font-weight="normal" stroke="#f2f2f2" stroke-width="0.31" textLength="54.4" lengthAdjust="spacingAndGlyphs" >125.5286</text>
<text x="1437.09" y="846.4" font-size="14" fill="#f2f2f2" text-anchor="start" font-weight="normal" stroke="#f2f2f2" stroke-width="0.31" textLength="54.4" lengthAdjust="spacingAndGlyphs" >175.1240</text>
<text x="1507.96" y="846.4" font-size="14" fill="#f2f2f2" text-anchor="start" font-weight="normal" stroke="#f2f2f2" stroke-width="0.31" textLength="54.4" lengthAdjust="spacingAndGlyphs" >236.3785</text>
<text x="1578.83" y="846.4" font-size="14" fill="#f2f2f2" text-anchor="start" font-weight="normal" stroke="#f2f2f2" stroke-width="0.31" textLength="54.4" lengthAdjust="spacingAndGlyphs" >307.7676</text>
<text x="1649.7" y="846.4" font-size="14" fill="#f2f2f2" text-anchor="start" font-weight="normal" stroke="#f2f2f2" stroke-width="0.31" textLength="54.4" lengthAdjust="spacingAndGlyphs" >386.1981</text>
<rect x="816.5" y="853.4" width="10.5" height="24.6" fill="#2a2a2a" />
<rect x="827" y="853.4" width="890.4" height="24.6" fill="#3d3d3d" />
<text x="830.9" y="871" font-size="14" fill="#f2f2f2" text-anchor="start" font-weight="normal" stroke="#f2f2f2" stroke-width="0.31" textLength="101.6" lengthAdjust="spacingAndGlyphs" >Gamma Log/Log</text>
<text x="941" y="871" font-size="14" fill="#f2f2f2" text-anchor="start" font-weight="normal" stroke="#f2f2f2" stroke-width="0.31" textLength="39.8" lengthAdjust="spacingAndGlyphs" >2.2000</text>
<text x="1011.87" y="871" font-size="14" fill="#f2f2f2" text-anchor="start" font-weight="normal" stroke="#f2f2f2" stroke-width="0.31" textLength="39.8" lengthAdjust="spacingAndGlyphs" >2.2602</text>
<text x="1082.74" y="871" font-size="14" fill="#f2f2f2" text-anchor="start" font-weight="normal" stroke="#f2f2f2" stroke-width="0.31" textLength="39.8" lengthAdjust="spacingAndGlyphs" >2.2476</text>
<text x="1153.61" y="871" font-size="14" fill="#f2f2f2" text-anchor="start" font-weight="normal" stroke="#f2f2f2" stroke-width="0.31" textLength="39.8" lengthAdjust="spacingAndGlyphs" >2.2737</text>
<text x="1224.48" y="871" font-size="14" fill="#f2f2f2" text-anchor="start" font-weight="normal" stroke="#f2f2f2" stroke-width="0.31" textLength="39.8" lengthAdjust="spacingAndGlyphs" >2.2583</text>
<text x="1295.35" y="871" font-size="14" fill="#f2f2f2" text-anchor="start" font-weight="normal" stroke="#f2f2f2" stroke-width="0.31" textLength="39.8" lengthAdjust="spacingAndGlyphs" >2.2423</text>
<text x="1366.22" y="871" font-size="14" fill="#f2f2f2" text-anchor="start" font-weight="normal" stroke="#f2f2f2" stroke-width="0.31" textLength="39.8" lengthAdjust="spacingAndGlyphs" >2.2624</text>
<text x="1437.09" y="871" font-size="14" fill="#f2f2f2" text-anchor="start" font-weight="normal" stroke="#f2f2f2" stroke-width="0.31" textLength="39.8" lengthAdjust="spacingAndGlyphs" >2.2705</text>
<text x="1507.96" y="871" font-size="14" fill="#f2f2f2" text-anchor="start" font-weight="normal" stroke="#f2f2f2" stroke-width="0.31" textLength="39.8" lengthAdjust="spacingAndGlyphs" >2.2601</text>
<text x="1578.83" y="871" font-size="14" fill="#f2f2f2" text-anchor="start" font-weight="normal" stroke="#f2f2f2" stroke-width="0.31" textLength="39.8" lengthAdjust="spacingAndGlyphs" >2.2351</text>
<text x="1649.7" y="871" font-size="14" fill="#f2f2f2" text-anchor="start" font-weight="normal" stroke="#f2f2f2" stroke-width="0.31" textLength="39.8" lengthAdjust="spacingAndGlyphs" >2.2000</text>
<rect x="816.5" y="878" width="10.5" height="24.6" fill="#2a2a2a" />
<rect x="827" y="878" width="890.4" height="24.6" fill="#7a7a7a" />
<text x="830.9" y="895.6" font-size="14" fill="#f2f2f2" text-anchor="start" font-weight="normal" stroke="#f2f2f2" stroke-width="0.31" textLength="24.5" lengthAdjust="spacingAndGlyphs" >CCT</text>
<text x="941" y="895.6" font-size="14" fill="#f2f2f2" text-anchor="start" font-weight="normal" stroke="#f2f2f2" stroke-width="0.31" textLength="61.7" lengthAdjust="spacingAndGlyphs" >5456.0000</text>
<text x="1011.87" y="895.6" font-size="14" fill="#f2f2f2" text-anchor="start" font-weight="normal" stroke="#f2f2f2" stroke-width="0.31" textLength="61.7" lengthAdjust="spacingAndGlyphs" >6336.0000</text>
<text x="1082.74" y="895.6" font-size="14" fill="#f2f2f2" text-anchor="start" font-weight="normal" stroke="#f2f2f2" stroke-width="0.31" textLength="61.7" lengthAdjust="spacingAndGlyphs" >6345.0000</text>
<text x="1153.61" y="895.6" font-size="14" fill="#f2f2f2" text-anchor="start" font-weight="normal" stroke="#f2f2f2" stroke-width="0.31" textLength="61.7" lengthAdjust="spacingAndGlyphs" >6333.0000</text>
<text x="1224.48" y="895.6" font-size="14" fill="#f2f2f2" text-anchor="start" font-weight="normal" stroke="#f2f2f2" stroke-width="0.31" textLength="61.7" lengthAdjust="spacingAndGlyphs" >6263.0000</text>
<text x="1295.35" y="895.6" font-size="14" fill="#f2f2f2" text-anchor="start" font-weight="normal" stroke="#f2f2f2" stroke-width="0.31" textLength="61.7" lengthAdjust="spacingAndGlyphs" >6229.0000</text>
<text x="1366.22" y="895.6" font-size="14" fill="#f2f2f2" text-anchor="start" font-weight="normal" stroke="#f2f2f2" stroke-width="0.31" textLength="61.7" lengthAdjust="spacingAndGlyphs" >6253.0000</text>
<text x="1437.09" y="895.6" font-size="14" fill="#f2f2f2" text-anchor="start" font-weight="normal" stroke="#f2f2f2" stroke-width="0.31" textLength="61.7" lengthAdjust="spacingAndGlyphs" >6319.0000</text>
<text x="1507.96" y="895.6" font-size="14" fill="#f2f2f2" text-anchor="start" font-weight="normal" stroke="#f2f2f2" stroke-width="0.31" textLength="61.7" lengthAdjust="spacingAndGlyphs" >6362.0000</text>
<text x="1578.83" y="895.6" font-size="14" fill="#f2f2f2" text-anchor="start" font-weight="normal" stroke="#f2f2f2" stroke-width="0.31" textLength="61.7" lengthAdjust="spacingAndGlyphs" >6413.0000</text>
<text x="1649.7" y="895.6" font-size="14" fill="#f2f2f2" text-anchor="start" font-weight="normal" stroke="#f2f2f2" stroke-width="0.31" textLength="61.7" lengthAdjust="spacingAndGlyphs" >6455.0000</text>
<rect x="816.5" y="902.6" width="10.5" height="24.6" fill="#2a2a2a" />
<rect x="827" y="902.6" width="890.4" height="24.6" fill="#3d3d3d" />
<text x="830.9" y="920.2" font-size="14" fill="#f2f2f2" text-anchor="start" font-weight="normal" stroke="#f2f2f2" stroke-width="0.31" textLength="49.5" lengthAdjust="spacingAndGlyphs" >ΔE 2000</text>
<text x="941" y="920.2" font-size="14" fill="#f2f2f2" text-anchor="start" font-weight="normal" stroke="#f2f2f2" stroke-width="0.31" textLength="39.8" lengthAdjust="spacingAndGlyphs" >0.0000</text>
<text x="1011.87" y="920.2" font-size="14" fill="#f2f2f2" text-anchor="start" font-weight="normal" stroke="#f2f2f2" stroke-width="0.31" textLength="39.8" lengthAdjust="spacingAndGlyphs" >0.7000</text>
<text x="1082.74" y="920.2" font-size="14" fill="#f2f2f2" text-anchor="start" font-weight="normal" stroke="#f2f2f2" stroke-width="0.31" textLength="39.8" lengthAdjust="spacingAndGlyphs" >0.9334</text>
<text x="1153.61" y="920.2" font-size="14" fill="#f2f2f2" text-anchor="start" font-weight="normal" stroke="#f2f2f2" stroke-width="0.31" textLength="39.8" lengthAdjust="spacingAndGlyphs" >1.3067</text>
<text x="1224.48" y="920.2" font-size="14" fill="#f2f2f2" text-anchor="start" font-weight="normal" stroke="#f2f2f2" stroke-width="0.31" textLength="39.8" lengthAdjust="spacingAndGlyphs" >1.4585</text>
<text x="1295.35" y="920.2" font-size="14" fill="#f2f2f2" text-anchor="start" font-weight="normal" stroke="#f2f2f2" stroke-width="0.31" textLength="39.8" lengthAdjust="spacingAndGlyphs" >1.6187</text>
<text x="1366.22" y="920.2" font-size="14" fill="#f2f2f2" text-anchor="start" font-weight="normal" stroke="#f2f2f2" stroke-width="0.31" textLength="39.8" lengthAdjust="spacingAndGlyphs" >1.7280</text>
<text x="1437.09" y="920.2" font-size="14" fill="#f2f2f2" text-anchor="start" font-weight="normal" stroke="#f2f2f2" stroke-width="0.31" textLength="39.8" lengthAdjust="spacingAndGlyphs" >1.3891</text>
<text x="1507.96" y="920.2" font-size="14" fill="#f2f2f2" text-anchor="start" font-weight="normal" stroke="#f2f2f2" stroke-width="0.31" textLength="39.8" lengthAdjust="spacingAndGlyphs" >1.1010</text>
<text x="1578.83" y="920.2" font-size="14" fill="#f2f2f2" text-anchor="start" font-weight="normal" stroke="#f2f2f2" stroke-width="0.31" textLength="39.8" lengthAdjust="spacingAndGlyphs" >0.7391</text>
<text x="1649.7" y="920.2" font-size="14" fill="#f2f2f2" text-anchor="start" font-weight="normal" stroke="#f2f2f2" stroke-width="0.31" textLength="39.8" lengthAdjust="spacingAndGlyphs" >0.5150</text>
<rect x="816.5" y="927.2" width="10.5" height="24.6" fill="#2a2a2a" />
<rect x="827" y="927.2" width="890.4" height="24.6" fill="#7a7a7a" />
<text x="830.9" y="944.8" font-size="14" fill="#f2f2f2" text-anchor="start" font-weight="normal" stroke="#f2f2f2" stroke-width="0.31" textLength="33" lengthAdjust="spacingAndGlyphs" >dEITP</text>
<text x="941" y="944.8" font-size="14" fill="#f2f2f2" text-anchor="start" font-weight="normal" stroke="#f2f2f2" stroke-width="0.31" textLength="39.8" lengthAdjust="spacingAndGlyphs" >0.0057</text>
<text x="1011.87" y="944.8" font-size="14" fill="#f2f2f2" text-anchor="start" font-weight="normal" stroke="#f2f2f2" stroke-width="0.31" textLength="39.8" lengthAdjust="spacingAndGlyphs" >6.3421</text>
<text x="1082.74" y="944.8" font-size="14" fill="#f2f2f2" text-anchor="start" font-weight="normal" stroke="#f2f2f2" stroke-width="0.31" textLength="39.8" lengthAdjust="spacingAndGlyphs" >4.6559</text>
<text x="1153.61" y="944.8" font-size="14" fill="#f2f2f2" text-anchor="start" font-weight="normal" stroke="#f2f2f2" stroke-width="0.31" textLength="39.8" lengthAdjust="spacingAndGlyphs" >5.9369</text>
<text x="1224.48" y="944.8" font-size="14" fill="#f2f2f2" text-anchor="start" font-weight="normal" stroke="#f2f2f2" stroke-width="0.31" textLength="39.8" lengthAdjust="spacingAndGlyphs" >4.2802</text>
<text x="1295.35" y="944.8" font-size="14" fill="#f2f2f2" text-anchor="start" font-weight="normal" stroke="#f2f2f2" stroke-width="0.31" textLength="39.8" lengthAdjust="spacingAndGlyphs" >3.3508</text>
<text x="1366.22" y="944.8" font-size="14" fill="#f2f2f2" text-anchor="start" font-weight="normal" stroke="#f2f2f2" stroke-width="0.31" textLength="39.8" lengthAdjust="spacingAndGlyphs" >3.4018</text>
<text x="1437.09" y="944.8" font-size="14" fill="#f2f2f2" text-anchor="start" font-weight="normal" stroke="#f2f2f2" stroke-width="0.31" textLength="39.8" lengthAdjust="spacingAndGlyphs" >2.6383</text>
<text x="1507.96" y="944.8" font-size="14" fill="#f2f2f2" text-anchor="start" font-weight="normal" stroke="#f2f2f2" stroke-width="0.31" textLength="39.8" lengthAdjust="spacingAndGlyphs" >1.7380</text>
<text x="1578.83" y="944.8" font-size="14" fill="#f2f2f2" text-anchor="start" font-weight="normal" stroke="#f2f2f2" stroke-width="0.31" textLength="39.8" lengthAdjust="spacingAndGlyphs" >0.9448</text>
<text x="1649.7" y="944.8" font-size="14" fill="#f2f2f2" text-anchor="start" font-weight="normal" stroke="#f2f2f2" stroke-width="0.31" textLength="39.8" lengthAdjust="spacingAndGlyphs" >0.5297</text>
<rect x="1402" y="1011" width="518" height="47" fill="url(#gPanel)" />
<rect x="151" y="1011.5" width="112" height="48" rx="3" fill="url(#gBtn)"/>
<rect x="155" y="1015.8" width="104" height="26.5" rx="2.5" fill="rgb(0,0,0)" stroke="rgba(0,0,0,0.35)" stroke-width="1"/>
<text x="207" y="1053.5" font-size="8.5" fill="#2e2e2e" text-anchor="middle" font-weight="normal" stroke="#2e2e2e" stroke-width="0.19" >0</text>
<rect x="265" y="1011.5" width="112" height="48" rx="3" fill="url(#gBtn)"/>
<rect x="269" y="1015.8" width="104" height="26.5" rx="2.5" fill="rgb(26,26,26)" stroke="rgba(0,0,0,0.35)" stroke-width="1"/>
<text x="321" y="1053.5" font-size="8.5" fill="#2e2e2e" text-anchor="middle" font-weight="normal" stroke="#2e2e2e" stroke-width="0.19" >10</text>
<rect x="379" y="1011.5" width="112" height="48" rx="3" fill="url(#gBtn)"/>
<rect x="383" y="1015.8" width="104" height="26.5" rx="2.5" fill="rgb(51,51,51)" stroke="rgba(0,0,0,0.35)" stroke-width="1"/>
<text x="435" y="1053.5" font-size="8.5" fill="#2e2e2e" text-anchor="middle" font-weight="normal" stroke="#2e2e2e" stroke-width="0.19" >20</text>
<rect x="493" y="1011.5" width="112" height="48" rx="3" fill="url(#gBtn)"/>
<rect x="497" y="1015.8" width="104" height="26.5" rx="2.5" fill="rgb(76,76,76)" stroke="rgba(0,0,0,0.35)" stroke-width="1"/>
<text x="549" y="1053.5" font-size="8.5" fill="#2e2e2e" text-anchor="middle" font-weight="normal" stroke="#2e2e2e" stroke-width="0.19" >30</text>
<rect x="607" y="1011.5" width="112" height="48" rx="3" fill="url(#gBtn)"/>
<rect x="611" y="1015.8" width="104" height="26.5" rx="2.5" fill="rgb(102,102,102)" stroke="rgba(0,0,0,0.35)" stroke-width="1"/>
<text x="663" y="1053.5" font-size="8.5" fill="#2e2e2e" text-anchor="middle" font-weight="normal" stroke="#2e2e2e" stroke-width="0.19" >40</text>
<rect x="721" y="1011.5" width="112" height="48" rx="3" fill="url(#gBtn)"/>
<rect x="725" y="1015.8" width="104" height="26.5" rx="2.5" fill="rgb(127,127,127)" stroke="rgba(0,0,0,0.35)" stroke-width="1"/>
<text x="777" y="1053.5" font-size="8.5" fill="#2e2e2e" text-anchor="middle" font-weight="normal" stroke="#2e2e2e" stroke-width="0.19" >50</text>
<rect x="835" y="1011.5" width="112" height="48" rx="3" fill="url(#gBtn)"/>
<rect x="839" y="1015.8" width="104" height="26.5" rx="2.5" fill="rgb(153,153,153)" stroke="rgba(0,0,0,0.35)" stroke-width="1"/>
<text x="891" y="1053.5" font-size="8.5" fill="#2e2e2e" text-anchor="middle" font-weight="normal" stroke="#2e2e2e" stroke-width="0.19" >60</text>
<rect x="949" y="1011.5" width="112" height="48" rx="3" fill="url(#gBtn)"/>
<rect x="953" y="1015.8" width="104" height="26.5" rx="2.5" fill="rgb(178,178,178)" stroke="rgba(0,0,0,0.35)" stroke-width="1"/>
<text x="1005" y="1053.5" font-size="8.5" fill="#2e2e2e" text-anchor="middle" font-weight="normal" stroke="#2e2e2e" stroke-width="0.19" >70</text>
<rect x="1063" y="1011.5" width="112" height="48" rx="3" fill="url(#gBtn)"/>
<rect x="1067" y="1015.8" width="104" height="26.5" rx="2.5" fill="rgb(204,204,204)" stroke="rgba(0,0,0,0.35)" stroke-width="1"/>
<text x="1119" y="1053.5" font-size="8.5" fill="#2e2e2e" text-anchor="middle" font-weight="normal" stroke="#2e2e2e" stroke-width="0.19" >80</text>
<rect x="1177" y="1011.5" width="112" height="48" rx="3" fill="url(#gBtn)"/>
<rect x="1181" y="1015.8" width="104" height="26.5" rx="2.5" fill="rgb(229,229,229)" stroke="rgba(0,0,0,0.35)" stroke-width="1"/>
<text x="1233" y="1053.5" font-size="8.5" fill="#2e2e2e" text-anchor="middle" font-weight="normal" stroke="#2e2e2e" stroke-width="0.19" >90</text>
<rect x="1291" y="1011.5" width="111.5" height="48" rx="3" fill="#2a2a2a"/>
<rect x="1294.7" y="1015" width="105" height="27.7" rx="2.5" fill="#ffffff"/>
<text x="1347" y="1053.5" font-size="9" fill="#ffffff" text-anchor="middle" font-weight="bold" >100</text>
<rect x="1715" y="1023" width="170" height="12" rx="2" fill="#5a5a5a"/>
<line x1="1715" y1="1023" x2="1715" y2="1035" stroke="#444" stroke-width="1" />
<line x1="1749" y1="1023" x2="1749" y2="1035" stroke="#444" stroke-width="1" />
<line x1="1783" y1="1023" x2="1783" y2="1035" stroke="#444" stroke-width="1" />
<line x1="1817" y1="1023" x2="1817" y2="1035" stroke="#444" stroke-width="1" />
<line x1="1851" y1="1023" x2="1851" y2="1035" stroke="#444" stroke-width="1" />
<rect x="1678" y="1026.6" width="35.2" height="33" rx="3" fill="#6c6c6c"/>
<rect x="1685.3" y="1031.2" width="20.2" height="20" rx="2" fill="#a0a0a0" stroke="#1e1e1e" stroke-width="1.8"/>
<rect x="1690.7" y="1036.3" width="10" height="10" fill="#000"/>
<rect x="1715.5" y="1035" width="102" height="24" rx="2" fill="url(#gBN)"/>
<rect x="1818" y="1035" width="102" height="24" rx="2" fill="url(#gBN)"/>
<line x1="1817.5" y1="1035" x2="1817.5" y2="1058" stroke="#666" stroke-width="1" />
<circle cx="1737.8" cy="1046.3" r="7" fill="url(#gCirc)"/><circle cx="1897.2" cy="1046.3" r="7" fill="url(#gCirc)"/>
<text x="1737.8" y="1051.3" font-size="15" fill="#2a2a2a" text-anchor="middle" font-weight="normal" stroke="#2a2a2a" stroke-width="0.33" >«</text>
<text x="1897.2" y="1051.3" font-size="15" fill="#2a2a2a" text-anchor="middle" font-weight="normal" stroke="#2a2a2a" stroke-width="0.33" >»</text>
<text x="1757" y="1052" font-size="17" fill="#303030" text-anchor="start" font-weight="normal" stroke="#303030" stroke-width="0.37" textLength="38" lengthAdjust="spacingAndGlyphs" >Back</text>
<text x="1837" y="1052" font-size="17" fill="#303030" text-anchor="start" font-weight="normal" stroke="#303030" stroke-width="0.37" textLength="40" lengthAdjust="spacingAndGlyphs" >Next</text>
<g opacity="0.8">
<path d="M1632 997 L1670.5 1005 L1671 1027 L1641 1030 M1632 997 L1634 1033 L1657 1047 L1697 1032 L1673 1028.5" fill="none" stroke="#e0e0e0" stroke-width="5.6" stroke-linejoin="round" stroke-linecap="round"/>
<path d="M1632 997 L1670.5 1005 L1671 1027 L1641 1030 M1632 997 L1634 1033 L1657 1047 L1697 1032 L1673 1028.5" fill="none" stroke="#a8303a" stroke-width="3.4" stroke-linejoin="round" stroke-linecap="round"/>
<path d="M1641 1009.5 L1646.5 1006.5 L1653.5 1017 L1674.5 995.5 L1653.5 1024.5 Z" fill="#2a2a2a" stroke="#e0e0e0" stroke-width="1.3" stroke-linejoin="round"/>
<text x="1675.5" y="1025.5" font-size="27.5" font-weight="bold" fill="#e0e0e0" stroke="#e0e0e0" stroke-width="3.6" stroke-linejoin="round" textLength="148" lengthAdjust="spacingAndGlyphs">NOTEBOOK</text>
<text x="1675.5" y="1025.5" font-size="27.5" font-weight="bold" fill="#a8303a" stroke="#a8303a" stroke-width="1.1" stroke-linejoin="round" textLength="148" lengthAdjust="spacingAndGlyphs">NOTEBOOK</text>
<text x="1823.5" y="1025.5" font-size="27.5" font-weight="bold" fill="none" stroke="#e0e0e0" stroke-width="4.2" stroke-linejoin="round" textLength="89" lengthAdjust="spacingAndGlyphs">CHECK</text>
<text x="1823.5" y="1025.5" font-size="27.5" font-weight="bold" fill="#6a6a6a" fill-opacity="0.5" stroke="#202020" stroke-width="2.2" stroke-linejoin="round" textLength="89" lengthAdjust="spacingAndGlyphs">CHECK</text>
</g></svg></body></html>
